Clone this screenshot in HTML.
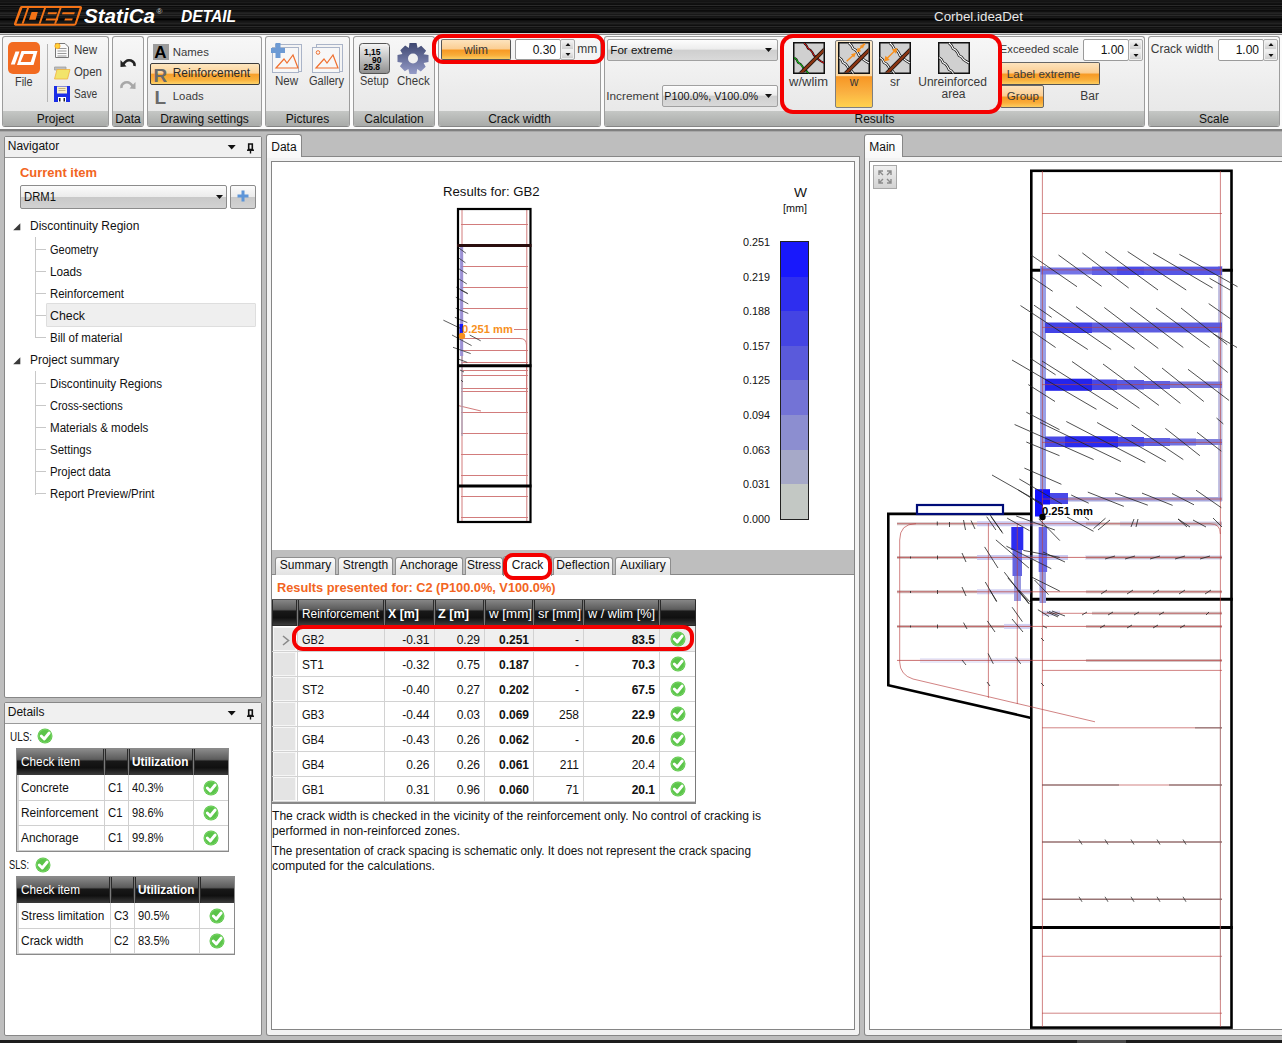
<!DOCTYPE html><html><head><meta charset="utf-8"><title>IDEA StatiCa DETAIL</title><style>
*{margin:0;padding:0;box-sizing:border-box}
html,body{width:1282px;height:1043px;overflow:hidden;background:#bdbdbd;font-family:"Liberation Sans",sans-serif;color:#000}
.t{position:absolute;white-space:nowrap}
.r{position:absolute}
svg{position:absolute;overflow:visible}
</style></head><body>
<div class="r" style="left:0px;top:0px;width:1282px;height:33px;background:linear-gradient(180deg,#161616 0px,#161616 1px,#141414 1px,#141414 2px,#1c1c1c 2px,#1c1c1c 3px,#111111 3px,#111111 4px,#0e0e0e 4px,#0e0e0e 5px,#2a2a2a 5px,#2a2a2a 6px,#0a0a0a 6px,#0a0a0a 7px,#181818 7px,#181818 8px,#121212 8px,#121212 9px,#1a1a1a 9px,#1a1a1a 10px,#0c0c0c 10px,#0c0c0c 11px,#101010 11px,#101010 12px,#1f1f1f 12px,#1f1f1f 13px,#242424 13px,#242424 14px,#181818 14px,#181818 15px,#2a2a2a 15px,#2a2a2a 16px,#141414 16px,#141414 17px,#1a1a1a 17px,#1a1a1a 18px,#0a0a0a 18px,#0a0a0a 19px,#020202 19px,#020202 20px,#0f0f0f 20px,#0f0f0f 21px,#161616 21px,#161616 22px,#1a1a1a 22px,#1a1a1a 23px,#232323 23px,#232323 24px,#181818 24px,#181818 25px,#0f0f0f 25px,#0f0f0f 26px,#2a2a2a 26px,#2a2a2a 27px,#111111 27px,#111111 28px,#1a1a1a 28px,#1a1a1a 29px,#121212 29px,#121212 30px,#141414 30px,#141414 31px,#0c0c0c 31px,#0c0c0c 32px,#0a0a0a 32px,#0a0a0a 33px);"></div>
<svg style="left:0;top:0" width="100" height="33" viewBox="0 0 100 33">
<g fill="#f47316">
<path d="M21.5 6 L80.5 6 Q82.6 6.2 82 8.2 L76.6 24 Q76 25.8 74 25.8 L15.5 25.8 Q13.4 25.6 14 23.6 L19.6 7.8 Q20.2 6 21.5 6 Z M22.4 8 L79.6 8 L74.6 23.8 L16.4 23.8 Z" fill-rule="evenodd"/>
<path d="M27 8 L29 8 L23.6 23.8 L21.6 23.8 Z"/>
<path d="M44 8 L46 8 L40.6 23.8 L38.6 23.8 Z"/>
<path d="M59.5 8 L61.5 8 L56.1 23.8 L54.1 23.8 Z"/>
<path d="M31.6 12 L37.8 12 L35.6 19.8 L29 19.8 Z"/>
<path d="M48.2 12.2 L57 12.2 L56.4 14.2 L47.5 14.2 Z"/>
<path d="M46.2 18.4 L58.4 18.4 L57.7 20.6 L45.5 20.6 Z"/>
<path d="M62.6 12.2 L74.8 12.2 L74.2 14.2 L62 14.2 Z"/>
<path d="M65 18.4 L72.8 18.4 L72.1 20.4 L64.3 20.4 Z"/>
</g>
</svg>
<div class="t" style="left:83.80px;top:5px;font-size:20px;line-height:22px;font-weight:700;color:#fff;font-style:italic;transform:scaleX(1.0304);transform-origin:0 0;">StatiCa</div>
<div class="t" style="left:156.52px;top:7px;font-size:8px;line-height:9px;color:#ccc;">&reg;</div>
<div class="t" style="left:180.54px;top:8px;font-size:16px;line-height:17px;font-weight:700;color:#fff;font-style:italic;transform:scaleX(0.9718);transform-origin:0 0;">DETAIL</div>
<div class="t" style="left:933.70px;top:9px;font-size:13.3px;line-height:15px;color:#e6e6e6;transform:scaleX(1.0033);transform-origin:0 0;">Corbel.ideaDet</div>
<div class="r" style="left:0px;top:33px;width:1282px;height:1px;background:#d0d0d0"></div>
<div class="r" style="left:0px;top:34px;width:1282px;height:1px;background:#8a8a8a"></div>
<div class="r" style="left:0px;top:35px;width:1282px;height:94px;background:#fbfbfb"></div>
<div class="r" style="left:0px;top:129px;width:1282px;height:2px;background:#7f7f7f"></div>
<div class="r" style="left:2px;top:36px;width:107px;height:91px;border:1px solid #9c9c9c;border-bottom-color:#858585;border-radius:3px;background:linear-gradient(180deg,#f7f7f7 0%,#ececec 60%,#e6e6e6 100%);overflow:hidden"><div style="position:absolute;left:0;right:0;top:74px;bottom:0;background:linear-gradient(180deg,#c5c7c5,#a9aba9)"></div></div>
<div class="t" style="left:2.00px;top:112px;font-size:12px;line-height:14px;color:#111;width:107px;text-align:center;">Project</div>
<div class="r" style="left:112px;top:36px;width:32px;height:91px;border:1px solid #9c9c9c;border-bottom-color:#858585;border-radius:3px;background:linear-gradient(180deg,#f7f7f7 0%,#ececec 60%,#e6e6e6 100%);overflow:hidden"><div style="position:absolute;left:0;right:0;top:74px;bottom:0;background:linear-gradient(180deg,#c5c7c5,#a9aba9)"></div></div>
<div class="t" style="left:112.00px;top:112px;font-size:12px;line-height:14px;color:#111;width:32px;text-align:center;">Data</div>
<div class="r" style="left:147px;top:36px;width:115px;height:91px;border:1px solid #9c9c9c;border-bottom-color:#858585;border-radius:3px;background:linear-gradient(180deg,#f7f7f7 0%,#ececec 60%,#e6e6e6 100%);overflow:hidden"><div style="position:absolute;left:0;right:0;top:74px;bottom:0;background:linear-gradient(180deg,#c5c7c5,#a9aba9)"></div></div>
<div class="t" style="left:147.00px;top:112px;font-size:12px;line-height:14px;color:#111;width:115px;text-align:center;">Drawing settings</div>
<div class="r" style="left:265px;top:36px;width:85px;height:91px;border:1px solid #9c9c9c;border-bottom-color:#858585;border-radius:3px;background:linear-gradient(180deg,#f7f7f7 0%,#ececec 60%,#e6e6e6 100%);overflow:hidden"><div style="position:absolute;left:0;right:0;top:74px;bottom:0;background:linear-gradient(180deg,#c5c7c5,#a9aba9)"></div></div>
<div class="t" style="left:265.00px;top:112px;font-size:12px;line-height:14px;color:#111;width:85px;text-align:center;">Pictures</div>
<div class="r" style="left:353px;top:36px;width:82px;height:91px;border:1px solid #9c9c9c;border-bottom-color:#858585;border-radius:3px;background:linear-gradient(180deg,#f7f7f7 0%,#ececec 60%,#e6e6e6 100%);overflow:hidden"><div style="position:absolute;left:0;right:0;top:74px;bottom:0;background:linear-gradient(180deg,#c5c7c5,#a9aba9)"></div></div>
<div class="t" style="left:353.00px;top:112px;font-size:12px;line-height:14px;color:#111;width:82px;text-align:center;">Calculation</div>
<div class="r" style="left:438px;top:36px;width:163px;height:91px;border:1px solid #9c9c9c;border-bottom-color:#858585;border-radius:3px;background:linear-gradient(180deg,#f7f7f7 0%,#ececec 60%,#e6e6e6 100%);overflow:hidden"><div style="position:absolute;left:0;right:0;top:74px;bottom:0;background:linear-gradient(180deg,#c5c7c5,#a9aba9)"></div></div>
<div class="t" style="left:438.00px;top:112px;font-size:12px;line-height:14px;color:#111;width:163px;text-align:center;">Crack width</div>
<div class="r" style="left:604px;top:36px;width:541px;height:91px;border:1px solid #9c9c9c;border-bottom-color:#858585;border-radius:3px;background:linear-gradient(180deg,#f7f7f7 0%,#ececec 60%,#e6e6e6 100%);overflow:hidden"><div style="position:absolute;left:0;right:0;top:74px;bottom:0;background:linear-gradient(180deg,#c5c7c5,#a9aba9)"></div></div>
<div class="t" style="left:604.00px;top:112px;font-size:12px;line-height:14px;color:#111;width:541px;text-align:center;">Results</div>
<div class="r" style="left:1148px;top:36px;width:132px;height:91px;border:1px solid #9c9c9c;border-bottom-color:#858585;border-radius:3px;background:linear-gradient(180deg,#f7f7f7 0%,#ececec 60%,#e6e6e6 100%);overflow:hidden"><div style="position:absolute;left:0;right:0;top:74px;bottom:0;background:linear-gradient(180deg,#c5c7c5,#a9aba9)"></div></div>
<div class="t" style="left:1148.00px;top:112px;font-size:12px;line-height:14px;color:#111;width:132px;text-align:center;">Scale</div>
<svg style="left:8px;top:42px" width="32" height="32" viewBox="0 0 32 32">
<rect x="0" y="0" width="32" height="32" rx="5" fill="#f26b21"/>
<path d="M7.5 9.5 L11.5 9.5 L6.8 22.5 L2.8 22.5 Z" fill="#fff"/>
<path d="M13.5 9 L29.5 9 L25.5 23 L9 23 Z M16 12 L25.3 12 L22.7 20 L12.6 20 Z" fill="#fff" fill-rule="evenodd"/>
</svg>
<div class="t" style="left:14.78px;top:75px;font-size:12px;line-height:14px;color:#3a3a3a;transform:scaleX(0.9047);transform-origin:0 0;">File</div>
<div class="r" style="left:47px;top:44px;width:1px;height:58px;background:#b4b4b4"></div>
<svg style="left:54px;top:42px" width="17" height="17" viewBox="0 0 17 17">
<path d="M1.5 1.5 L11 1.5 L14.5 5 L14.5 15.5 L1.5 15.5 Z" fill="#fafafa" stroke="#777" stroke-width="1"/>
<path d="M3.5 6.5 H12.5 M3.5 9 H12.5 M3.5 11.5 H12.5 M3.5 14 H12.5" stroke="#9a9a9a" stroke-width="1"/>
<circle cx="3.5" cy="4" r="2.6" fill="#ffd23a" stroke="#f5a020" stroke-width="0.8"/>
</svg>
<div class="t" style="left:73.98px;top:43px;font-size:12px;line-height:14px;color:#3a3a3a;transform:scaleX(0.9660);transform-origin:0 0;">New</div>
<svg style="left:54px;top:66px" width="17" height="14" viewBox="0 0 17 14">
<path d="M0.5 1 L12 1 L12 4 L0.5 4 Z" fill="#bdbdbd" stroke="#a0a0a0" stroke-width="0.8"/>
<path d="M3 3.5 L16 3.5 L13.5 13 L0.5 13 Z" fill="#f2e46a" stroke="#f0b040" stroke-width="0.8"/>
</svg>
<div class="t" style="left:73.98px;top:65px;font-size:12px;line-height:14px;color:#3a3a3a;transform:scaleX(0.9503);transform-origin:0 0;">Open</div>
<svg style="left:54px;top:86px" width="16" height="16" viewBox="0 0 16 16">
<rect x="0" y="0" width="16" height="16" fill="#1a2de6"/>
<rect x="3" y="0.5" width="10" height="7" fill="#f8efc8"/>
<path d="M4.5 2.5 H11.5 M4.5 4.5 H11.5" stroke="#b0a070" stroke-width="0.8"/>
<rect x="4" y="11" width="8" height="5" fill="#fff"/>
<rect x="5" y="12" width="1.5" height="3.5" fill="#222"/><rect x="9.5" y="12" width="1.5" height="3.5" fill="#222"/>
</svg>
<div class="t" style="left:73.98px;top:87px;font-size:12px;line-height:14px;color:#3a3a3a;transform:scaleX(0.8480);transform-origin:0 0;">Save</div>
<svg style="left:120px;top:56px" width="16" height="34" viewBox="0 0 16 34">
<path d="M3 9 Q6 3 11 4.5 Q15 6 14.5 10" fill="none" stroke="#222" stroke-width="2.6"/>
<path d="M0.5 4 L6.5 10.5 L0.5 11 Z" fill="#222"/>
<path d="M13 31 Q10 25 5 26.5 Q1 28 1.5 32" fill="none" stroke="#a8a8a8" stroke-width="2.6"/>
<path d="M15.5 26 L9.5 32.5 L15.5 33 Z" fill="#a8a8a8"/>
</svg>
<div class="r" style="left:150px;top:63px;width:110px;height:22px;border:1px solid #3d3d3d;border-radius:2px;background:linear-gradient(180deg,#fde6c0 0%,#fbd39a 45%,#f7a02c 52%,#f9b13d 80%,#fdd36a 100%)"></div>
<div class="r" style="left:153px;top:44px;width:16px;height:16px;background:#9c9c9c"></div>
<div class="t" style="left:150.48px;top:43px;font-size:17px;line-height:19px;font-weight:900;color:#000;font-weight:bold;width:20px;text-align:center;">A</div>
<div class="t" style="left:150.36px;top:65px;font-size:19px;line-height:21px;font-weight:700;color:#6a6a6a;width:20px;text-align:center;">R</div>
<div class="t" style="left:151.36px;top:87px;font-size:19px;line-height:21px;font-weight:700;color:#6a6a6a;width:18px;text-align:center;">L</div>
<div class="t" style="left:172.82px;top:46px;font-size:11.4px;line-height:12px;color:#3a3a3a;">Names</div>
<div class="t" style="left:172.79px;top:66px;font-size:11.9px;line-height:14px;color:#2a2a2a;">Reinforcement</div>
<div class="t" style="left:172.82px;top:90px;font-size:11.3px;line-height:12px;color:#3a3a3a;">Loads</div>
<svg style="left:270px;top:41px" width="80" height="34" viewBox="0 0 80 34">
<rect x="5.5" y="3.5" width="26" height="27" fill="#f4f4f4" stroke="#aab4c8"/>
<rect x="2.5" y="6.5" width="26" height="25" fill="#f7f7f7" stroke="#aab4c8"/>
<path d="M6 27 L14 18 L17 22 L23 14 L28 27 Z" fill="none" stroke="#f07030" stroke-width="1.2"/>
<rect x="1" y="7" width="14" height="5" fill="#6c9ad4"/><rect x="5.5" y="2" width="5" height="15" fill="#6c9ad4"/>
<rect x="46.5" y="3.5" width="26" height="27" fill="#f4f4f4" stroke="#aab4c8"/>
<rect x="42.5" y="6.5" width="27" height="25" fill="#f7f7f7" stroke="#aab4c8"/>
<path d="M46 27 L54 18 L57 22 L63 14 L68 27 Z" fill="none" stroke="#f07030" stroke-width="1.2"/>
<circle cx="48" cy="11.5" r="1.8" fill="none" stroke="#f07030" stroke-width="1"/>
</svg>
<div class="t" style="left:274.88px;top:74px;font-size:12px;line-height:14px;color:#3a3a3a;transform:scaleX(0.9660);transform-origin:0 0;">New</div>
<div class="t" style="left:308.98px;top:74px;font-size:12px;line-height:14px;color:#3a3a3a;transform:scaleX(0.9233);transform-origin:0 0;">Gallery</div>
<svg style="left:359px;top:43px" width="72" height="32" viewBox="0 0 72 32">
<defs><linearGradient id="gs" x1="0" y1="0" x2="0" y2="1"><stop offset="0" stop-color="#f6f6f6"/><stop offset="1" stop-color="#8e8e8e"/></linearGradient>
<linearGradient id="gg" x1="0" y1="0" x2="0" y2="1"><stop offset="0" stop-color="#3d4670"/><stop offset="1" stop-color="#959cc8"/></linearGradient></defs>
<rect x="0.5" y="0.5" width="30" height="30" rx="3" fill="url(#gs)" stroke="#555"/>
<text x="5" y="12" font-family="Liberation Sans" font-weight="bold" font-size="8.5">1,15</text>
<text x="13" y="19.5" font-family="Liberation Sans" font-weight="bold" font-size="8.5">90</text>
<text x="4.5" y="27" font-family="Liberation Sans" font-weight="bold" font-size="8.5">25.8</text>
<g transform="translate(54,15.5)">
<path d="M-3.5 -15.5 L3.5 -15.5 L4.6 -10.6 L8.2 -12.7 L13.1 -7.8 L10.6 -4.2 L15.5 -3.5 L15.5 3.5 L10.6 4.6 L12.7 8.2 L7.8 13.1 L4.2 10.6 L3.5 15.5 L-3.5 15.5 L-4.6 10.6 L-8.2 12.7 L-13.1 7.8 L-10.6 4.2 L-15.5 3.5 L-15.5 -3.5 L-10.6 -4.6 L-12.7 -8.2 L-7.8 -13.1 L-4.2 -10.6 Z" fill="url(#gg)"/>
<circle r="5" fill="#f0f0f0"/>
</g>
</svg>
<div class="t" style="left:359.78px;top:74px;font-size:12px;line-height:14px;color:#3a3a3a;transform:scaleX(0.9152);transform-origin:0 0;">Setup</div>
<div class="t" style="left:396.58px;top:74px;font-size:12px;line-height:14px;color:#3a3a3a;transform:scaleX(0.9613);transform-origin:0 0;">Check</div>
<div class="r" style="left:441px;top:39px;width:70px;height:21px;border:1px solid #555;border-top-color:#777;border-radius:2px;background:linear-gradient(180deg,#fde3bd 0%,#fbcf95 45%,#f79a25 55%,#f9ad3a 80%,#fccd60 100%);"></div>
<div class="t" style="left:441.00px;top:43px;font-size:12px;line-height:14px;color:#3a3a3a;width:70px;text-align:center;">wlim</div>
<div class="r" style="left:515px;top:39px;width:46px;height:21px;background:#fff;border:1px solid #9a9a9a;border-radius:2px"></div>
<div class="t" style="left:515.00px;top:43px;font-size:12px;line-height:14px;color:#111;width:41px;text-align:right;">0.30</div>
<div class="r" style="left:560px;top:39px;width:15px;height:21px;background:#f0f0f0;border:1px solid #a8a8a8;border-radius:2px"></div>
<div class="r" style="left:562px;top:41px;width:11px;height:7.5px;background:linear-gradient(180deg,#f2f2f2,#cfcfcf)"></div>
<div class="r" style="left:562px;top:50.5px;width:11px;height:7.5px;background:linear-gradient(180deg,#f2f2f2,#cfcfcf)"></div>
<svg style="left:564.5px;top:42px" width="6" height="15" viewBox="0 0 6 15"><path d="M0.5 4 L3 1 L5.5 4 Z" fill="#111"/><path d="M0.5 11 L3 14 L5.5 11 Z" fill="#111"/></svg>
<div class="t" style="left:577.28px;top:42px;font-size:12px;line-height:14px;color:#3a3a3a;">mm</div>
<div class="r" style="left:607px;top:39px;width:171px;height:22px;border:1px solid #a0a0a0;border-radius:2px;background:linear-gradient(180deg,#fdfdfd 0%,#ededed 45%,#cfcfcf 52%,#d9d9d9 100%)"></div>
<div class="t" style="left:610.30px;top:44px;font-size:11.6px;line-height:12px;color:#111;">For extreme</div>
<svg style="left:765px;top:48.0px" width="7" height="4" viewBox="0 0 7 4"><path d="M0 0 L7 0 L3.5 4 Z" fill="#111"/></svg>
<div class="t" style="left:606.29px;top:89px;font-size:11.8px;line-height:14px;color:#3a3a3a;">Increment</div>
<div class="r" style="left:662px;top:85px;width:116px;height:22px;border:1px solid #a0a0a0;border-radius:2px;background:linear-gradient(180deg,#fdfdfd 0%,#ededed 45%,#cfcfcf 52%,#d9d9d9 100%)"></div>
<div class="t" style="left:664.35px;top:90px;font-size:10.8px;line-height:12px;color:#111;">P100.0%, V100.0%</div>
<svg style="left:765px;top:94.0px" width="7" height="4" viewBox="0 0 7 4"><path d="M0 0 L7 0 L3.5 4 Z" fill="#111"/></svg>
<div class="r" style="left:835px;top:40px;width:38px;height:68px;border:1px solid #7f7f7f;border-radius:2px;background:linear-gradient(180deg,#fde9c8 0%,#fbd9a4 53%,#f79624 54%,#fab142 78%,#ffd24e 100%)"></div>
<svg style="left:793px;top:42px" width="32" height="32" viewBox="0 0 32 32"><rect x="0.75" y="0.75" width="30.5" height="30.5" fill="#d0d0d0" stroke="#111" stroke-width="1.5"/><path d="M11 1 L13.5 3.5 L15 6.5 L17.5 8 L19.5 10.5 L21 13.5 L23.5 15 L25.5 17.5 L27.5 19 L31 21" fill="none" stroke="#111" stroke-width="2"/><path d="M11 1 L13.5 3.5 L15 6.5 L17.5 8 L19.5 10.5 L21 13.5 L23.5 15 L25.5 17.5 L27.5 19 L31 21" fill="none" stroke="#e01010" stroke-width="1"/><path d="M1 15.5 L3.5 17.5 L5 20.5 L7.5 22 L9.5 24.5 L11 27.5 L13.5 29 L15.5 31.5" fill="none" stroke="#111" stroke-width="2"/><path d="M1 15.5 L3.5 17.5 L5 20.5 L7.5 22 L9.5 24.5 L11 27.5 L13.5 29 L15.5 31.5" fill="none" stroke="#10e010" stroke-width="1"/><clipPath id="ciwwlim"><rect x="1.5" y="1.5" width="29" height="29"/></clipPath><g clip-path="url(#ciwwlim)"><path d="M6.5 32.5 L32.5 6.5" stroke="#111" stroke-width="4"/><path d="M6.5 32.5 L32.5 6.5" stroke="#8a3412" stroke-width="2.6"/></g></svg>
<svg style="left:838px;top:42px" width="32" height="32" viewBox="0 0 32 32"><rect x="0.75" y="0.75" width="30.5" height="30.5" fill="#d0d0d0" stroke="#111" stroke-width="1.5"/><path d="M11 1 L13.5 3.5 L15 6.5 L17.5 8 L19.5 10.5 L21 13.5 L23.5 15 L25.5 17.5 L27.5 19 L31 21" fill="none" stroke="#111" stroke-width="2.6"/><path d="M11 1 L13.5 3.5 L15 6.5 L17.5 8 L19.5 10.5 L21 13.5 L23.5 15 L25.5 17.5 L27.5 19 L31 21" fill="none" stroke="#fff" stroke-width="1.1"/><path d="M1 15.5 L3.5 17.5 L5 20.5 L7.5 22 L9.5 24.5 L11 27.5 L13.5 29 L15.5 31.5" fill="none" stroke="#111" stroke-width="2.6"/><path d="M1 15.5 L3.5 17.5 L5 20.5 L7.5 22 L9.5 24.5 L11 27.5 L13.5 29 L15.5 31.5" fill="none" stroke="#fff" stroke-width="1.1"/><clipPath id="ciw"><rect x="1.5" y="1.5" width="29" height="29"/></clipPath><g clip-path="url(#ciw)"><path d="M6.5 32.5 L32.5 6.5" stroke="#111" stroke-width="4"/><path d="M6.5 32.5 L32.5 6.5" stroke="#8a3412" stroke-width="2.6"/></g><path d="M8.7 19.2 L15.5 13 M20.5 8 L27 1.7" stroke="#f7901e" stroke-width="1.5"/><path d="M18 10.8 L13 12.2 L16.2 15.5 Z M18.4 10.4 L23.2 9.2 L19.8 5.6 Z" fill="#f7901e"/><path d="M21.5 4 L27 1 L25 6.5 Z" fill="#f7901e" fill-opacity="0.8"/></svg>
<svg style="left:879px;top:42px" width="32" height="32" viewBox="0 0 32 32"><rect x="0.75" y="0.75" width="30.5" height="30.5" fill="#d0d0d0" stroke="#111" stroke-width="1.5"/><path d="M11 1 L13.5 3.5 L15 6.5 L17.5 8 L19.5 10.5 L21 13.5 L23.5 15 L25.5 17.5 L27.5 19 L31 21" fill="none" stroke="#111" stroke-width="2.6"/><path d="M11 1 L13.5 3.5 L15 6.5 L17.5 8 L19.5 10.5 L21 13.5 L23.5 15 L25.5 17.5 L27.5 19 L31 21" fill="none" stroke="#fff" stroke-width="1.1"/><path d="M1 15.5 L3.5 17.5 L5 20.5 L7.5 22 L9.5 24.5 L11 27.5 L13.5 29 L15.5 31.5" fill="none" stroke="#111" stroke-width="2.6"/><path d="M1 15.5 L3.5 17.5 L5 20.5 L7.5 22 L9.5 24.5 L11 27.5 L13.5 29 L15.5 31.5" fill="none" stroke="#fff" stroke-width="1.1"/><clipPath id="cisr"><rect x="1.5" y="1.5" width="29" height="29"/></clipPath><g clip-path="url(#cisr)"><path d="M6.5 32.5 L32.5 6.5" stroke="#111" stroke-width="4"/><path d="M6.5 32.5 L32.5 6.5" stroke="#8a3412" stroke-width="2.6"/></g><path d="M7.5 17 L16 8.5" stroke="#f7901e" stroke-width="1.5"/><path d="M5 19.5 L6.5 13.8 L10.8 18 Z M18.5 6 L12.8 7.5 L17 11.8 Z" fill="#f7901e"/></svg>
<svg style="left:938px;top:42px" width="32" height="32" viewBox="0 0 32 32"><rect x="0.75" y="0.75" width="30.5" height="30.5" fill="#d0d0d0" stroke="#111" stroke-width="1.5"/><path d="M11 1 L13.5 3.5 L15 6.5 L17.5 8 L19.5 10.5 L21 13.5 L23.5 15 L25.5 17.5 L27.5 19 L31 21" fill="none" stroke="#111" stroke-width="2.6"/><path d="M11 1 L13.5 3.5 L15 6.5 L17.5 8 L19.5 10.5 L21 13.5 L23.5 15 L25.5 17.5 L27.5 19 L31 21" fill="none" stroke="#fff" stroke-width="1.1"/><path d="M1 15.5 L3.5 17.5 L5 20.5 L7.5 22 L9.5 24.5 L11 27.5 L13.5 29 L15.5 31.5" fill="none" stroke="#111" stroke-width="2.6"/><path d="M1 15.5 L3.5 17.5 L5 20.5 L7.5 22 L9.5 24.5 L11 27.5 L13.5 29 L15.5 31.5" fill="none" stroke="#fff" stroke-width="1.1"/></svg>
<div class="t" style="left:788.68px;top:75px;font-size:12px;line-height:14px;color:#3a3a3a;transform:scaleX(1.0833);transform-origin:0 0;">w/wlim</div>
<div class="t" style="left:835.00px;top:75px;font-size:12px;line-height:14px;color:#3a3a3a;width:38px;text-align:center;">w</div>
<div class="t" style="left:878.00px;top:75px;font-size:12px;line-height:14px;color:#3a3a3a;width:34px;text-align:center;">sr</div>
<div class="t" style="left:918.28px;top:75px;font-size:12px;line-height:14px;color:#3a3a3a;">Unreinforced</div>
<div class="t" style="left:919.00px;top:87px;font-size:12px;line-height:14px;color:#3a3a3a;width:69px;text-align:center;">area</div>
<div class="t" style="left:999.83px;top:43px;font-size:11.2px;line-height:12px;color:#3a3a3a;">Exceeded scale</div>
<div class="r" style="left:1083px;top:39px;width:46px;height:22px;background:#fff;border:1px solid #9a9a9a;border-radius:2px"></div>
<div class="t" style="left:1083.00px;top:43px;font-size:12px;line-height:14px;color:#111;width:41px;text-align:right;">1.00</div>
<div class="r" style="left:1128px;top:39px;width:15px;height:22px;background:#f0f0f0;border:1px solid #a8a8a8;border-radius:2px"></div>
<div class="r" style="left:1130px;top:41px;width:11px;height:8.0px;background:linear-gradient(180deg,#f2f2f2,#cfcfcf)"></div>
<div class="r" style="left:1130px;top:51.0px;width:11px;height:8.0px;background:linear-gradient(180deg,#f2f2f2,#cfcfcf)"></div>
<svg style="left:1132.5px;top:42px" width="6" height="16" viewBox="0 0 6 16"><path d="M0.5 4 L3 1 L5.5 4 Z" fill="#111"/><path d="M0.5 12 L3 15 L5.5 12 Z" fill="#111"/></svg>
<div class="r" style="left:1000px;top:62px;width:100px;height:23px;border:1px solid #555;border-top-color:#666;border-radius:2px;background:linear-gradient(180deg,#fde3bd 0%,#fbcf95 45%,#f79a25 55%,#f9ad3a 80%,#fccd60 100%);"></div>
<div class="t" style="left:1006.80px;top:68px;font-size:11.6px;line-height:12px;color:#3a3a3a;">Label extreme</div>
<div class="r" style="left:1000px;top:85px;width:44px;height:23px;border:1px solid #666;border-radius:2px;background:linear-gradient(180deg,#fde3bd 0%,#fbcf95 45%,#f79a25 55%,#f9ad3a 80%,#fccd60 100%);"></div>
<div class="t" style="left:1006.80px;top:90px;font-size:11.6px;line-height:12px;color:#3a3a3a;">Group</div>
<div class="t" style="left:1080.28px;top:89px;font-size:12px;line-height:14px;color:#3a3a3a;">Bar</div>
<div class="t" style="left:1150.78px;top:42px;font-size:12px;line-height:14px;color:#3a3a3a;">Crack width</div>
<div class="r" style="left:1218px;top:39px;width:46px;height:22px;background:#fff;border:1px solid #9a9a9a;border-radius:2px"></div>
<div class="t" style="left:1218.00px;top:43px;font-size:12px;line-height:14px;color:#111;width:41px;text-align:right;">1.00</div>
<div class="r" style="left:1263px;top:39px;width:15px;height:22px;background:#f0f0f0;border:1px solid #a8a8a8;border-radius:2px"></div>
<div class="r" style="left:1265px;top:41px;width:11px;height:8.0px;background:linear-gradient(180deg,#f2f2f2,#cfcfcf)"></div>
<div class="r" style="left:1265px;top:51.0px;width:11px;height:8.0px;background:linear-gradient(180deg,#f2f2f2,#cfcfcf)"></div>
<svg style="left:1267.5px;top:42px" width="6" height="16" viewBox="0 0 6 16"><path d="M0.5 4 L3 1 L5.5 4 Z" fill="#111"/><path d="M0.5 12 L3 15 L5.5 12 Z" fill="#111"/></svg>
<div class="r" style="left:432px;top:34px;width:173px;height:29.5px;border:4px solid #f40000;border-radius:11px"></div>
<div class="r" style="left:780px;top:34px;width:221.5px;height:79.5px;border:4px solid #f40000;border-radius:13px"></div>
<div class="r" style="left:0px;top:131px;width:1282px;height:909px;background:#bebebe"></div>
<div class="r" style="left:0px;top:1040px;width:1282px;height:3px;background:#1c1c1c"></div>
<div class="r" style="left:1077px;top:1040px;width:49px;height:3px;background:#4a4a4a"></div>
<div class="r" style="left:0px;top:131px;width:1282px;height:1px;background:#a8a8a8"></div>
<div class="r" style="left:4px;top:136px;width:258px;height:562px;background:#fff;border:1px solid #878787;border-radius:2px"></div>
<div class="r" style="left:5px;top:137px;width:256px;height:21px;background:#f0f0f0;border-bottom:1px solid #9a9a9a"></div>
<div class="t" style="left:7.78px;top:139px;font-size:12px;line-height:14px;color:#111;">Navigator</div>
<svg style="left:227px;top:143px" width="30" height="12" viewBox="0 0 30 12"><path d="M0.7 2 L8.7 2 L4.7 6.5 Z" fill="#111"/><path d="M21.7 1 H25.3 V6.5 H21.7 Z" fill="none" stroke="#111" stroke-width="1.6"/><path d="M20 7.2 H27" stroke="#111" stroke-width="1.5"/><path d="M23.5 7.5 V10.5" stroke="#111" stroke-width="1.4"/></svg>
<div class="r" style="left:4px;top:702px;width:258px;height:334px;background:#fff;border:1px solid #878787;border-radius:2px"></div>
<div class="r" style="left:5px;top:703px;width:256px;height:21px;background:#f0f0f0;border-bottom:1px solid #9a9a9a"></div>
<div class="t" style="left:7.78px;top:705px;font-size:12px;line-height:14px;color:#111;">Details</div>
<svg style="left:227px;top:709px" width="30" height="12" viewBox="0 0 30 12"><path d="M0.7 2 L8.7 2 L4.7 6.5 Z" fill="#111"/><path d="M21.7 1 H25.3 V6.5 H21.7 Z" fill="none" stroke="#111" stroke-width="1.6"/><path d="M20 7.2 H27" stroke="#111" stroke-width="1.5"/><path d="M23.5 7.5 V10.5" stroke="#111" stroke-width="1.4"/></svg>
<div class="r" style="left:266px;top:134px;width:36px;height:24px;background:linear-gradient(180deg,#fff,#f8f8f8);border:1px solid #878787;border-bottom:none;border-radius:3px 3px 0 0"></div>
<div class="t" style="left:271.28px;top:140px;font-size:12px;line-height:14px;color:#111;">Data</div>
<div class="r" style="left:266px;top:157px;width:594px;height:879px;background:#f3f3f3;border:1px solid #878787;border-top:none;border-radius:0 0 3px 3px"></div>
<div class="r" style="left:302px;top:156px;width:558px;height:1px;background:#878787"></div>
<div class="r" style="left:267px;top:157px;width:34px;height:1px;background:#f8f8f8"></div>
<div class="r" style="left:271px;top:161px;width:584px;height:869px;background:#fff;border:1px solid #858585"></div>
<div class="r" style="left:864px;top:134px;width:39px;height:24px;background:linear-gradient(180deg,#fff,#f8f8f8);border:1px solid #878787;border-bottom:none;border-radius:3px 3px 0 0"></div>
<div class="t" style="left:869.28px;top:140px;font-size:12px;line-height:14px;color:#111;">Main</div>
<div class="r" style="left:864px;top:157px;width:440px;height:879px;background:#f3f3f3;border:1px solid #878787;border-top:none;border-radius:0 0 3px 3px"></div>
<div class="r" style="left:903px;top:156px;width:401px;height:1px;background:#878787"></div>
<div class="r" style="left:865px;top:157px;width:37px;height:1px;background:#f8f8f8"></div>
<div class="r" style="left:869px;top:161px;width:430px;height:869px;background:#fff;border:1px solid #858585"></div>
<div class="t" style="left:19.52px;top:165px;font-size:13px;line-height:15px;font-weight:700;color:#f26522;transform:scaleX(0.9962);transform-origin:0 0;">Current item</div>
<div class="r" style="left:20px;top:185px;width:207px;height:24px;border:1px solid #8c8c8c;border-radius:2px;background:linear-gradient(180deg,#fbfbfb 0%,#ececec 48%,#c9c9c9 52%,#d2d2d2 100%)"></div>
<div class="t" style="left:23.65px;top:190px;font-size:12.5px;line-height:14px;color:#111;transform:scaleX(0.9034);transform-origin:0 0;">DRM1</div>
<svg style="left:216px;top:195px" width="7" height="5" viewBox="0 0 7 5"><path d="M0 0 L7 0 L3.5 4 Z" fill="#111"/></svg>
<div class="r" style="left:230px;top:185px;width:26px;height:24px;border:1px solid #8c8c8c;border-radius:2px;background:linear-gradient(180deg,#fbfbfb 0%,#ececec 48%,#c9c9c9 52%,#d2d2d2 100%)"></div>
<svg style="left:237px;top:190px" width="12" height="12" viewBox="0 0 12 12"><path d="M4.5 0.5 H7.5 V4.5 H11.5 V7.5 H7.5 V11.5 H4.5 V7.5 H0.5 V4.5 H4.5 Z" fill="#5d95d8"/></svg>
<svg style="left:13px;top:223px" width="8" height="8" viewBox="0 0 8 8"><path d="M7.3 0.2 L7.3 7.2 L0.2 7.2 Z" fill="#3a3a3a"/></svg>
<div class="t" style="left:29.68px;top:219px;font-size:12px;line-height:14px;color:#111;transform:scaleX(0.9992);transform-origin:0 0;">Discontinuity Region</div>
<div class="r" style="left:46px;top:303px;width:210px;height:24px;background:#efefef;border:1px solid #dedede;border-radius:1px"></div>
<div class="r" style="left:35px;top:237px;width:1px;height:101px;background:#c8c8c8"></div>
<div class="r" style="left:36px;top:249px;width:10px;height:1px;background:#c8c8c8"></div>
<div class="t" style="left:49.88px;top:243px;font-size:12px;line-height:14px;color:#111;transform:scaleX(0.9148);transform-origin:0 0;">Geometry</div>
<div class="r" style="left:36px;top:271px;width:10px;height:1px;background:#c8c8c8"></div>
<div class="t" style="left:49.88px;top:265px;font-size:12px;line-height:14px;color:#111;transform:scaleX(0.9785);transform-origin:0 0;">Loads</div>
<div class="r" style="left:36px;top:293px;width:10px;height:1px;background:#c8c8c8"></div>
<div class="t" style="left:49.88px;top:287px;font-size:12px;line-height:14px;color:#111;transform:scaleX(0.9481);transform-origin:0 0;">Reinforcement</div>
<div class="r" style="left:36px;top:315px;width:10px;height:1px;background:#c8c8c8"></div>
<div class="t" style="left:49.88px;top:309px;font-size:12px;line-height:14px;color:#111;transform:scaleX(1.0289);transform-origin:0 0;">Check</div>
<div class="r" style="left:36px;top:337px;width:10px;height:1px;background:#c8c8c8"></div>
<div class="t" style="left:49.88px;top:331px;font-size:12px;line-height:14px;color:#111;transform:scaleX(0.9581);transform-origin:0 0;">Bill of material</div>
<svg style="left:13px;top:357px" width="8" height="8" viewBox="0 0 8 8"><path d="M7.3 0.2 L7.3 7.2 L0.2 7.2 Z" fill="#3a3a3a"/></svg>
<div class="t" style="left:29.68px;top:353px;font-size:12px;line-height:14px;color:#111;transform:scaleX(0.9919);transform-origin:0 0;">Project summary</div>
<div class="r" style="left:35px;top:371px;width:1px;height:124px;background:#c8c8c8"></div>
<div class="r" style="left:36px;top:383px;width:10px;height:1px;background:#c8c8c8"></div>
<div class="t" style="left:49.88px;top:377px;font-size:12px;line-height:14px;color:#111;transform:scaleX(0.9723);transform-origin:0 0;">Discontinuity Regions</div>
<div class="r" style="left:36px;top:405px;width:10px;height:1px;background:#c8c8c8"></div>
<div class="t" style="left:49.88px;top:399px;font-size:12px;line-height:14px;color:#111;transform:scaleX(0.9161);transform-origin:0 0;">Cross-sections</div>
<div class="r" style="left:36px;top:427px;width:10px;height:1px;background:#c8c8c8"></div>
<div class="t" style="left:49.88px;top:421px;font-size:12px;line-height:14px;color:#111;transform:scaleX(0.9643);transform-origin:0 0;">Materials &amp; models</div>
<div class="r" style="left:36px;top:449px;width:10px;height:1px;background:#c8c8c8"></div>
<div class="t" style="left:49.88px;top:443px;font-size:12px;line-height:14px;color:#111;transform:scaleX(0.9548);transform-origin:0 0;">Settings</div>
<div class="r" style="left:36px;top:471px;width:10px;height:1px;background:#c8c8c8"></div>
<div class="t" style="left:49.88px;top:465px;font-size:12px;line-height:14px;color:#111;transform:scaleX(0.9446);transform-origin:0 0;">Project data</div>
<div class="r" style="left:36px;top:493px;width:10px;height:1px;background:#c8c8c8"></div>
<div class="t" style="left:49.88px;top:487px;font-size:12px;line-height:14px;color:#111;transform:scaleX(0.9496);transform-origin:0 0;">Report Preview/Print</div>
<div class="t" style="left:9.98px;top:730px;font-size:12px;line-height:14px;color:#111;transform:scaleX(0.8244);transform-origin:0 0;">ULS:</div>
<svg style="left:37.4px;top:728.4px" width="16.0" height="16.0" viewBox="-8.0 -8.0 16.0 16.0"><circle r="7.5" fill="#5bc44a"/><circle r="6.5" fill="none" stroke="#7fd86c" stroke-width="0.8"/><path d="M-3.75 0.00 L-0.75 3.00 L4.12 -3.00" fill="none" stroke="#fff" stroke-width="2.85" stroke-linecap="round" stroke-linejoin="round"/></svg>
<div class="r" style="left:16px;top:748px;width:212.5px;height:104px;background:#fff;border:1px solid #8a8a8a"></div>
<div class="r" style="left:17px;top:749px;width:210.5px;height:26px;background:linear-gradient(180deg,#8a8a8a 0%,#5c5c5c 40%,#181818 47%,#101010 72%,#3c3c3c 100%);"></div>
<div class="r" style="left:17px;top:775px;width:2px;height:76px;background:#d8d8d8"></div>
<div class="r" style="left:102.5px;top:749px;width:3px;height:26px;background:linear-gradient(90deg,#2a2a2a 0,#2a2a2a 1px,#7a7a7a 1px,#7a7a7a 2px,#2a2a2a 2px)"></div>
<div class="r" style="left:103.5px;top:775px;width:1px;height:76px;background:#d0d0d0"></div>
<div class="r" style="left:126.5px;top:749px;width:3px;height:26px;background:linear-gradient(90deg,#2a2a2a 0,#2a2a2a 1px,#7a7a7a 1px,#7a7a7a 2px,#2a2a2a 2px)"></div>
<div class="r" style="left:127.5px;top:775px;width:1px;height:76px;background:#d0d0d0"></div>
<div class="r" style="left:191.5px;top:749px;width:3px;height:26px;background:linear-gradient(90deg,#2a2a2a 0,#2a2a2a 1px,#7a7a7a 1px,#7a7a7a 2px,#2a2a2a 2px)"></div>
<div class="r" style="left:192.5px;top:775px;width:1px;height:76px;background:#d0d0d0"></div>
<div class="r" style="left:18px;top:800px;width:209.5px;height:1px;background:#d0d0d0"></div>
<div class="r" style="left:18px;top:825px;width:209.5px;height:1px;background:#d0d0d0"></div>
<div class="r" style="left:18px;top:850px;width:209.5px;height:1px;background:#d0d0d0"></div>
<div class="t" style="left:20.78px;top:755px;font-size:12px;line-height:14px;color:#fff;transform:scaleX(0.9828);transform-origin:0 0;">Check item</div>
<div class="t" style="left:132.28px;top:755px;font-size:12px;line-height:14px;font-weight:700;color:#fff;transform:scaleX(0.9838);transform-origin:0 0;">Utilization</div>
<div class="t" style="left:20.78px;top:781px;font-size:12px;line-height:14px;color:#111;transform:scaleX(0.9794);transform-origin:0 0;">Concrete</div>
<div class="t" style="left:108.28px;top:781px;font-size:12px;line-height:14px;color:#111;transform:scaleX(0.9450);transform-origin:0 0;">C1</div>
<div class="t" style="left:132.28px;top:781px;font-size:12px;line-height:14px;color:#111;transform:scaleX(0.9256);transform-origin:0 0;">40.3%</div>
<svg style="left:203.0px;top:779.5px" width="16.0" height="16.0" viewBox="-8.0 -8.0 16.0 16.0"><circle r="7.5" fill="#5bc44a"/><circle r="6.5" fill="none" stroke="#7fd86c" stroke-width="0.8"/><path d="M-3.75 0.00 L-0.75 3.00 L4.12 -3.00" fill="none" stroke="#fff" stroke-width="2.85" stroke-linecap="round" stroke-linejoin="round"/></svg>
<div class="t" style="left:20.78px;top:806px;font-size:12px;line-height:14px;color:#111;transform:scaleX(0.9904);transform-origin:0 0;">Reinforcement</div>
<div class="t" style="left:108.28px;top:806px;font-size:12px;line-height:14px;color:#111;transform:scaleX(0.9450);transform-origin:0 0;">C1</div>
<div class="t" style="left:132.28px;top:806px;font-size:12px;line-height:14px;color:#111;transform:scaleX(0.9256);transform-origin:0 0;">98.6%</div>
<svg style="left:203.0px;top:804.5px" width="16.0" height="16.0" viewBox="-8.0 -8.0 16.0 16.0"><circle r="7.5" fill="#5bc44a"/><circle r="6.5" fill="none" stroke="#7fd86c" stroke-width="0.8"/><path d="M-3.75 0.00 L-0.75 3.00 L4.12 -3.00" fill="none" stroke="#fff" stroke-width="2.85" stroke-linecap="round" stroke-linejoin="round"/></svg>
<div class="t" style="left:20.78px;top:831px;font-size:12px;line-height:14px;color:#111;transform:scaleX(0.9906);transform-origin:0 0;">Anchorage</div>
<div class="t" style="left:108.28px;top:831px;font-size:12px;line-height:14px;color:#111;transform:scaleX(0.9450);transform-origin:0 0;">C1</div>
<div class="t" style="left:132.28px;top:831px;font-size:12px;line-height:14px;color:#111;transform:scaleX(0.9256);transform-origin:0 0;">99.8%</div>
<svg style="left:203.0px;top:829.5px" width="16.0" height="16.0" viewBox="-8.0 -8.0 16.0 16.0"><circle r="7.5" fill="#5bc44a"/><circle r="6.5" fill="none" stroke="#7fd86c" stroke-width="0.8"/><path d="M-3.75 0.00 L-0.75 3.00 L4.12 -3.00" fill="none" stroke="#fff" stroke-width="2.85" stroke-linecap="round" stroke-linejoin="round"/></svg>
<div class="t" style="left:9.28px;top:858px;font-size:12px;line-height:14px;color:#111;transform:scaleX(0.7688);transform-origin:0 0;">SLS:</div>
<svg style="left:35.4px;top:856.6px" width="16.0" height="16.0" viewBox="-8.0 -8.0 16.0 16.0"><circle r="7.5" fill="#5bc44a"/><circle r="6.5" fill="none" stroke="#7fd86c" stroke-width="0.8"/><path d="M-3.75 0.00 L-0.75 3.00 L4.12 -3.00" fill="none" stroke="#fff" stroke-width="2.85" stroke-linecap="round" stroke-linejoin="round"/></svg>
<div class="r" style="left:16px;top:876px;width:218.5px;height:79px;background:#fff;border:1px solid #8a8a8a"></div>
<div class="r" style="left:17px;top:877px;width:216.5px;height:26px;background:linear-gradient(180deg,#8a8a8a 0%,#5c5c5c 40%,#181818 47%,#101010 72%,#3c3c3c 100%);"></div>
<div class="r" style="left:17px;top:903px;width:2px;height:51px;background:#d8d8d8"></div>
<div class="r" style="left:108.5px;top:877px;width:3px;height:26px;background:linear-gradient(90deg,#2a2a2a 0,#2a2a2a 1px,#7a7a7a 1px,#7a7a7a 2px,#2a2a2a 2px)"></div>
<div class="r" style="left:109.5px;top:903px;width:1px;height:51px;background:#d0d0d0"></div>
<div class="r" style="left:132.5px;top:877px;width:3px;height:26px;background:linear-gradient(90deg,#2a2a2a 0,#2a2a2a 1px,#7a7a7a 1px,#7a7a7a 2px,#2a2a2a 2px)"></div>
<div class="r" style="left:133.5px;top:903px;width:1px;height:51px;background:#d0d0d0"></div>
<div class="r" style="left:197.5px;top:877px;width:3px;height:26px;background:linear-gradient(90deg,#2a2a2a 0,#2a2a2a 1px,#7a7a7a 1px,#7a7a7a 2px,#2a2a2a 2px)"></div>
<div class="r" style="left:198.5px;top:903px;width:1px;height:51px;background:#d0d0d0"></div>
<div class="r" style="left:18px;top:928px;width:215.5px;height:1px;background:#d0d0d0"></div>
<div class="r" style="left:18px;top:953px;width:215.5px;height:1px;background:#d0d0d0"></div>
<div class="t" style="left:20.78px;top:883px;font-size:12px;line-height:14px;color:#fff;transform:scaleX(0.9828);transform-origin:0 0;">Check item</div>
<div class="t" style="left:138.28px;top:883px;font-size:12px;line-height:14px;font-weight:700;color:#fff;transform:scaleX(0.9838);transform-origin:0 0;">Utilization</div>
<div class="t" style="left:20.78px;top:909px;font-size:12px;line-height:14px;color:#111;transform:scaleX(0.9823);transform-origin:0 0;">Stress limitation</div>
<div class="t" style="left:114.28px;top:909px;font-size:12px;line-height:14px;color:#111;transform:scaleX(0.9450);transform-origin:0 0;">C3</div>
<div class="t" style="left:138.28px;top:909px;font-size:12px;line-height:14px;color:#111;transform:scaleX(0.9256);transform-origin:0 0;">90.5%</div>
<svg style="left:209.0px;top:907.5px" width="16.0" height="16.0" viewBox="-8.0 -8.0 16.0 16.0"><circle r="7.5" fill="#5bc44a"/><circle r="6.5" fill="none" stroke="#7fd86c" stroke-width="0.8"/><path d="M-3.75 0.00 L-0.75 3.00 L4.12 -3.00" fill="none" stroke="#fff" stroke-width="2.85" stroke-linecap="round" stroke-linejoin="round"/></svg>
<div class="t" style="left:20.78px;top:934px;font-size:12px;line-height:14px;color:#111;transform:scaleX(0.9970);transform-origin:0 0;">Crack width</div>
<div class="t" style="left:114.28px;top:934px;font-size:12px;line-height:14px;color:#111;transform:scaleX(0.9450);transform-origin:0 0;">C2</div>
<div class="t" style="left:138.28px;top:934px;font-size:12px;line-height:14px;color:#111;transform:scaleX(0.9256);transform-origin:0 0;">83.5%</div>
<svg style="left:209.0px;top:932.5px" width="16.0" height="16.0" viewBox="-8.0 -8.0 16.0 16.0"><circle r="7.5" fill="#5bc44a"/><circle r="6.5" fill="none" stroke="#7fd86c" stroke-width="0.8"/><path d="M-3.75 0.00 L-0.75 3.00 L4.12 -3.00" fill="none" stroke="#fff" stroke-width="2.85" stroke-linecap="round" stroke-linejoin="round"/></svg>
<div class="t" style="left:442.52px;top:184px;font-size:13px;line-height:15px;color:#111;transform:scaleX(1.0128);transform-origin:0 0;">Results for: GB2</div>
<svg style="left:0;top:0" width="1282" height="1043" viewBox="0 0 1282 1043">
<line x1="461" y1="224.5" x2="528" y2="224.5" stroke="#d27c7c" stroke-width="1"/>
<line x1="461" y1="266.5" x2="528" y2="266.5" stroke="#d27c7c" stroke-width="1"/>
<line x1="461" y1="287.5" x2="528" y2="287.5" stroke="#d27c7c" stroke-width="1"/>
<line x1="461" y1="308.5" x2="528" y2="308.5" stroke="#d27c7c" stroke-width="1"/>
<line x1="461" y1="350.5" x2="528" y2="350.5" stroke="#d27c7c" stroke-width="1"/>
<line x1="461" y1="362.5" x2="528" y2="362.5" stroke="#d27c7c" stroke-width="1"/>
<line x1="461" y1="370.5" x2="528" y2="370.5" stroke="#d27c7c" stroke-width="1"/>
<line x1="461" y1="375.5" x2="528" y2="375.5" stroke="#d27c7c" stroke-width="1"/>
<line x1="461" y1="388.5" x2="528" y2="388.5" stroke="#d27c7c" stroke-width="1"/>
<line x1="461" y1="391.5" x2="528" y2="391.5" stroke="#d27c7c" stroke-width="1"/>
<line x1="461" y1="412.5" x2="528" y2="412.5" stroke="#d27c7c" stroke-width="1"/>
<line x1="461" y1="433.5" x2="528" y2="433.5" stroke="#d27c7c" stroke-width="1"/>
<line x1="461" y1="454.5" x2="528" y2="454.5" stroke="#d27c7c" stroke-width="1"/>
<line x1="461" y1="475.5" x2="528" y2="475.5" stroke="#d27c7c" stroke-width="1"/>
<line x1="461" y1="496.5" x2="528" y2="496.5" stroke="#d27c7c" stroke-width="1"/>
<line x1="461" y1="517.5" x2="528" y2="517.5" stroke="#d27c7c" stroke-width="1"/>
<line x1="514" y1="329.5" x2="528" y2="329.5" stroke="#d27c7c" stroke-width="1"/>
<path d="M461 338.5 H520 Q526.5 338.5 526.5 345 V412" fill="none" stroke="#d27c7c" stroke-width="1"/>
<line x1="462" y1="209" x2="462" y2="522" stroke="#d27c7c" stroke-width="1"/>
<line x1="526.8" y1="209" x2="526.8" y2="522" stroke="#d27c7c" stroke-width="1"/>
<line x1="458" y1="405.5" x2="481" y2="411" stroke="#d27c7c" stroke-width="1"/>
<rect x="460" y="246" width="3.2" height="110" fill="#8a84d6" fill-opacity="0.8"/>
<rect x="459.5" y="324" width="3.5" height="12" fill="#1a1aff"/>
<rect x="461" y="356" width="2" height="80" fill="#a6a0b8" fill-opacity="0.6"/>
<line x1="458.7" y1="247.9" x2="465.9" y2="253.2" stroke="#333" stroke-width="0.8"/>
<line x1="458.7" y1="258" x2="465.4" y2="262.8" stroke="#333" stroke-width="0.8"/>
<line x1="457.7" y1="268" x2="466.8" y2="273.8" stroke="#333" stroke-width="0.8"/>
<line x1="457.7" y1="278.1" x2="466.8" y2="283.9" stroke="#333" stroke-width="0.8"/>
<line x1="456.3" y1="287.2" x2="467.8" y2="293.5" stroke="#333" stroke-width="0.8"/>
<line x1="460.6" y1="290" x2="467.8" y2="293.8" stroke="#333" stroke-width="0.8"/>
<line x1="455.8" y1="297.2" x2="468.3" y2="303.9" stroke="#333" stroke-width="0.8"/>
<line x1="455.8" y1="308.2" x2="468.3" y2="313.5" stroke="#333" stroke-width="0.8"/>
<line x1="454.9" y1="317.3" x2="467.3" y2="322.6" stroke="#333" stroke-width="0.8"/>
<line x1="443.4" y1="320.2" x2="460.6" y2="328.4" stroke="#333" stroke-width="0.8"/>
<line x1="452" y1="335" x2="471.6" y2="345.6" stroke="#333" stroke-width="0.8"/>
<line x1="469.7" y1="335" x2="480.7" y2="340.8" stroke="#333" stroke-width="0.8"/>
<line x1="453" y1="347.3" x2="470.7" y2="353.6" stroke="#333" stroke-width="0.8"/>
<line x1="458.2" y1="359" x2="467.3" y2="362.4" stroke="#333" stroke-width="0.8"/>
<line x1="460" y1="370" x2="464" y2="372" stroke="#333" stroke-width="0.8"/>
<line x1="461" y1="380" x2="463" y2="382" stroke="#333" stroke-width="0.8"/>
<rect x="458" y="209" width="72.5" height="313" fill="none" stroke="#000" stroke-width="2.2"/>
<line x1="457" y1="245.5" x2="531.5" y2="245.5" stroke="#2a0e0e" stroke-width="3"/>
<line x1="457" y1="365.8" x2="531.5" y2="365.8" stroke="#000" stroke-width="3"/>
<line x1="457" y1="486" x2="531.5" y2="486" stroke="#000" stroke-width="3"/>
<circle cx="462" cy="336" r="3.2" fill="#f7901e"/>
</svg>
<div class="t" style="left:461.84px;top:323px;font-size:11px;line-height:12px;font-weight:700;color:#f7901e;transform:scaleX(1.0128);transform-origin:0 0;">0.251 mm</div>
<div class="t" style="left:794.09px;top:185px;font-size:13.5px;line-height:15px;color:#111;transform:scaleX(1.0196);transform-origin:0 0;">W</div>
<div class="t" style="left:782.80px;top:203px;font-size:10px;line-height:11px;color:#111;transform:scaleX(1.0802);transform-origin:0 0;">[mm]</div>
<div class="r" style="left:781px;top:242px;width:27px;height:35px;background:#1818fc"></div>
<div class="r" style="left:781px;top:277px;width:27px;height:34px;background:#2e2eef"></div>
<div class="r" style="left:781px;top:311px;width:27px;height:35px;background:#4444e3"></div>
<div class="r" style="left:781px;top:346px;width:27px;height:34px;background:#5a5adb"></div>
<div class="r" style="left:781px;top:380px;width:27px;height:35px;background:#7373d6"></div>
<div class="r" style="left:781px;top:415px;width:27px;height:35px;background:#8c8ed0"></div>
<div class="r" style="left:781px;top:450px;width:27px;height:34px;background:#a6a9c8"></div>
<div class="r" style="left:781px;top:484px;width:27px;height:35px;background:#c3c8c4"></div>
<div class="r" style="left:780px;top:241px;width:29px;height:279px;border:1px solid #222"></div>
<div class="t" style="left:743.36px;top:236px;font-size:10.7px;line-height:12px;color:#111;transform:scaleX(1.0093);transform-origin:0 0;">0.251</div>
<div class="t" style="left:743.36px;top:271px;font-size:10.7px;line-height:12px;color:#111;transform:scaleX(1.0093);transform-origin:0 0;">0.219</div>
<div class="t" style="left:743.36px;top:305px;font-size:10.7px;line-height:12px;color:#111;transform:scaleX(1.0093);transform-origin:0 0;">0.188</div>
<div class="t" style="left:743.36px;top:340px;font-size:10.7px;line-height:12px;color:#111;transform:scaleX(1.0093);transform-origin:0 0;">0.157</div>
<div class="t" style="left:743.36px;top:374px;font-size:10.7px;line-height:12px;color:#111;transform:scaleX(1.0093);transform-origin:0 0;">0.125</div>
<div class="t" style="left:743.36px;top:409px;font-size:10.7px;line-height:12px;color:#111;transform:scaleX(1.0093);transform-origin:0 0;">0.094</div>
<div class="t" style="left:743.36px;top:444px;font-size:10.7px;line-height:12px;color:#111;transform:scaleX(1.0093);transform-origin:0 0;">0.063</div>
<div class="t" style="left:743.36px;top:478px;font-size:10.7px;line-height:12px;color:#111;transform:scaleX(1.0093);transform-origin:0 0;">0.031</div>
<div class="t" style="left:743.36px;top:513px;font-size:10.7px;line-height:12px;color:#111;transform:scaleX(1.0093);transform-origin:0 0;">0.000</div>
<div class="r" style="left:272px;top:550px;width:582px;height:25px;background:#bebebe;border-bottom:1px solid #888"></div>
<div class="r" style="left:272px;top:575px;width:582px;height:454px;background:#fff"></div>
<div class="r" style="left:275px;top:557px;width:61px;height:18px;background:linear-gradient(180deg,#fbfbfb,#e2e2e2);border:1px solid #8e8e8e;border-bottom:none;border-radius:3px 3px 0 0"></div>
<div class="t" style="left:275.00px;top:558px;font-size:12px;line-height:14px;color:#111;width:61px;text-align:center;">Summary</div>
<div class="r" style="left:338px;top:557px;width:55px;height:18px;background:linear-gradient(180deg,#fbfbfb,#e2e2e2);border:1px solid #8e8e8e;border-bottom:none;border-radius:3px 3px 0 0"></div>
<div class="t" style="left:338.00px;top:558px;font-size:12px;line-height:14px;color:#111;width:55px;text-align:center;">Strength</div>
<div class="r" style="left:395px;top:557px;width:68px;height:18px;background:linear-gradient(180deg,#fbfbfb,#e2e2e2);border:1px solid #8e8e8e;border-bottom:none;border-radius:3px 3px 0 0"></div>
<div class="t" style="left:395.00px;top:558px;font-size:12px;line-height:14px;color:#111;width:68px;text-align:center;">Anchorage</div>
<div class="r" style="left:465px;top:557px;width:38px;height:18px;background:linear-gradient(180deg,#fbfbfb,#e2e2e2);border:1px solid #8e8e8e;border-bottom:none;border-radius:3px 3px 0 0"></div>
<div class="t" style="left:465.00px;top:558px;font-size:12px;line-height:14px;color:#111;width:38px;text-align:center;">Stress</div>
<div class="r" style="left:503px;top:556px;width:49px;height:20px;background:#fff;border:1px solid #888;border-bottom:none;border-radius:3px 3px 0 0"></div>
<div class="t" style="left:503.00px;top:558px;font-size:12px;line-height:14px;color:#111;width:49px;text-align:center;">Crack</div>
<div class="r" style="left:553px;top:557px;width:60px;height:18px;background:linear-gradient(180deg,#fbfbfb,#e2e2e2);border:1px solid #8e8e8e;border-bottom:none;border-radius:3px 3px 0 0"></div>
<div class="t" style="left:553.00px;top:558px;font-size:12px;line-height:14px;color:#111;width:60px;text-align:center;">Deflection</div>
<div class="r" style="left:615px;top:557px;width:56px;height:18px;background:linear-gradient(180deg,#fbfbfb,#e2e2e2);border:1px solid #8e8e8e;border-bottom:none;border-radius:3px 3px 0 0"></div>
<div class="t" style="left:615.00px;top:558px;font-size:12px;line-height:14px;color:#111;width:56px;text-align:center;">Auxiliary</div>
<div class="t" style="left:276.75px;top:581px;font-size:12.5px;line-height:14px;font-weight:700;color:#f26522;transform:scaleX(1.0227);transform-origin:0 0;">Results presented for: C2 (P100.0%, V100.0%)</div>
<div class="r" style="left:272px;top:599px;width:423.5px;height:205px;background:#fff;border:1px solid #7a7a7a;border-top:none"></div>
<div class="r" style="left:272px;top:599px;width:423.5px;height:27px;background:linear-gradient(180deg,#8a8a8a 0%,#5c5c5c 40%,#181818 47%,#101010 72%,#3c3c3c 100%);border:1px solid #2a2a2a;border-top:none;"></div>
<div class="r" style="left:296px;top:600px;width:3px;height:26px;background:linear-gradient(90deg,#2a2a2a 0,#2a2a2a 1px,#7a7a7a 1px,#7a7a7a 2px,#2a2a2a 2px)"></div>
<div class="r" style="left:382.5px;top:600px;width:3px;height:26px;background:linear-gradient(90deg,#2a2a2a 0,#2a2a2a 1px,#7a7a7a 1px,#7a7a7a 2px,#2a2a2a 2px)"></div>
<div class="r" style="left:432.5px;top:600px;width:3px;height:26px;background:linear-gradient(90deg,#2a2a2a 0,#2a2a2a 1px,#7a7a7a 1px,#7a7a7a 2px,#2a2a2a 2px)"></div>
<div class="r" style="left:483px;top:600px;width:3px;height:26px;background:linear-gradient(90deg,#2a2a2a 0,#2a2a2a 1px,#7a7a7a 1px,#7a7a7a 2px,#2a2a2a 2px)"></div>
<div class="r" style="left:532px;top:600px;width:3px;height:26px;background:linear-gradient(90deg,#2a2a2a 0,#2a2a2a 1px,#7a7a7a 1px,#7a7a7a 2px,#2a2a2a 2px)"></div>
<div class="r" style="left:582px;top:600px;width:3px;height:26px;background:linear-gradient(90deg,#2a2a2a 0,#2a2a2a 1px,#7a7a7a 1px,#7a7a7a 2px,#2a2a2a 2px)"></div>
<div class="r" style="left:658px;top:600px;width:3px;height:26px;background:linear-gradient(90deg,#2a2a2a 0,#2a2a2a 1px,#7a7a7a 1px,#7a7a7a 2px,#2a2a2a 2px)"></div>
<div class="r" style="left:272px;top:599px;width:423.5px;height:1px;background:#555"></div>
<div class="r" style="left:273px;top:627px;width:23px;height:24px;background:#e4e4e4;border:1px solid #f6f6f6"></div>
<div class="r" style="left:297px;top:626px;width:397.5px;height:25px;background:#efefef"></div>
<div class="r" style="left:272px;top:651px;width:422.5px;height:1px;background:#d2d2d2"></div>
<div class="r" style="left:273px;top:652px;width:23px;height:24px;background:#e4e4e4;border:1px solid #f6f6f6"></div>
<div class="r" style="left:272px;top:676px;width:422.5px;height:1px;background:#d2d2d2"></div>
<div class="r" style="left:273px;top:677px;width:23px;height:24px;background:#e4e4e4;border:1px solid #f6f6f6"></div>
<div class="r" style="left:272px;top:701px;width:422.5px;height:1px;background:#d2d2d2"></div>
<div class="r" style="left:273px;top:702px;width:23px;height:24px;background:#e4e4e4;border:1px solid #f6f6f6"></div>
<div class="r" style="left:272px;top:726px;width:422.5px;height:1px;background:#d2d2d2"></div>
<div class="r" style="left:273px;top:727px;width:23px;height:24px;background:#e4e4e4;border:1px solid #f6f6f6"></div>
<div class="r" style="left:272px;top:751px;width:422.5px;height:1px;background:#d2d2d2"></div>
<div class="r" style="left:273px;top:752px;width:23px;height:24px;background:#e4e4e4;border:1px solid #f6f6f6"></div>
<div class="r" style="left:272px;top:776px;width:422.5px;height:1px;background:#d2d2d2"></div>
<div class="r" style="left:273px;top:777px;width:23px;height:24px;background:#e4e4e4;border:1px solid #f6f6f6"></div>
<div class="r" style="left:272px;top:801px;width:422.5px;height:1px;background:#d2d2d2"></div>
<div class="r" style="left:297px;top:626px;width:1px;height:176px;background:#d2d2d2"></div>
<div class="r" style="left:383.5px;top:626px;width:1px;height:176px;background:#d2d2d2"></div>
<div class="r" style="left:433.5px;top:626px;width:1px;height:176px;background:#d2d2d2"></div>
<div class="r" style="left:484px;top:626px;width:1px;height:176px;background:#d2d2d2"></div>
<div class="r" style="left:533px;top:626px;width:1px;height:176px;background:#d2d2d2"></div>
<div class="r" style="left:583px;top:626px;width:1px;height:176px;background:#d2d2d2"></div>
<div class="r" style="left:659px;top:626px;width:1px;height:176px;background:#d2d2d2"></div>
<div class="r" style="left:272px;top:802px;width:423.5px;height:2px;background:#888"></div>
<div class="t" style="left:301.78px;top:607px;font-size:12px;line-height:14px;color:#fff;transform:scaleX(0.9866);transform-origin:0 0;">Reinforcement</div>
<div class="t" style="left:388.28px;top:607px;font-size:12px;line-height:14px;font-weight:700;color:#fff;transform:scaleX(1.0333);transform-origin:0 0;">X [m]</div>
<div class="t" style="left:438.28px;top:607px;font-size:12px;line-height:14px;font-weight:700;color:#fff;transform:scaleX(1.0570);transform-origin:0 0;">Z [m]</div>
<div class="t" style="left:488.78px;top:607px;font-size:12px;line-height:14px;color:#fff;transform:scaleX(1.1119);transform-origin:0 0;">w [mm]</div>
<div class="t" style="left:537.78px;top:607px;font-size:12px;line-height:14px;color:#fff;transform:scaleX(1.0750);transform-origin:0 0;">sr [mm]</div>
<div class="t" style="left:587.78px;top:607px;font-size:12px;line-height:14px;color:#fff;transform:scaleX(1.0577);transform-origin:0 0;">w / wlim [%]</div>
<div class="t" style="left:301.78px;top:633px;font-size:12px;line-height:14px;color:#111;transform:scaleX(0.9161);transform-origin:0 0;">GB2</div>
<div class="t" style="left:383.50px;top:633px;font-size:12px;line-height:14px;color:#111;width:46.0px;text-align:right;">-0.31</div>
<div class="t" style="left:433.50px;top:633px;font-size:12px;line-height:14px;color:#111;width:46.5px;text-align:right;">0.29</div>
<div class="t" style="left:484.00px;top:633px;font-size:12px;line-height:14px;font-weight:700;color:#111;width:45px;text-align:right;">0.251</div>
<div class="t" style="left:533.00px;top:633px;font-size:12px;line-height:14px;color:#111;width:46px;text-align:right;">-</div>
<div class="t" style="left:583.00px;top:633px;font-size:12px;line-height:14px;font-weight:700;color:#111;width:72px;text-align:right;">83.5</div>
<svg style="left:669.8px;top:630.5px" width="16.0" height="16.0" viewBox="-8.0 -8.0 16.0 16.0"><circle r="7.5" fill="#5bc44a"/><circle r="6.5" fill="none" stroke="#7fd86c" stroke-width="0.8"/><path d="M-3.75 0.00 L-0.75 3.00 L4.12 -3.00" fill="none" stroke="#fff" stroke-width="2.85" stroke-linecap="round" stroke-linejoin="round"/></svg>
<div class="t" style="left:301.78px;top:658px;font-size:12px;line-height:14px;color:#111;transform:scaleX(0.9993);transform-origin:0 0;">ST1</div>
<div class="t" style="left:383.50px;top:658px;font-size:12px;line-height:14px;color:#111;width:46.0px;text-align:right;">-0.32</div>
<div class="t" style="left:433.50px;top:658px;font-size:12px;line-height:14px;color:#111;width:46.5px;text-align:right;">0.75</div>
<div class="t" style="left:484.00px;top:658px;font-size:12px;line-height:14px;font-weight:700;color:#111;width:45px;text-align:right;">0.187</div>
<div class="t" style="left:533.00px;top:658px;font-size:12px;line-height:14px;color:#111;width:46px;text-align:right;">-</div>
<div class="t" style="left:583.00px;top:658px;font-size:12px;line-height:14px;font-weight:700;color:#111;width:72px;text-align:right;">70.3</div>
<svg style="left:669.8px;top:655.5px" width="16.0" height="16.0" viewBox="-8.0 -8.0 16.0 16.0"><circle r="7.5" fill="#5bc44a"/><circle r="6.5" fill="none" stroke="#7fd86c" stroke-width="0.8"/><path d="M-3.75 0.00 L-0.75 3.00 L4.12 -3.00" fill="none" stroke="#fff" stroke-width="2.85" stroke-linecap="round" stroke-linejoin="round"/></svg>
<div class="t" style="left:301.78px;top:683px;font-size:12px;line-height:14px;color:#111;transform:scaleX(0.9993);transform-origin:0 0;">ST2</div>
<div class="t" style="left:383.50px;top:683px;font-size:12px;line-height:14px;color:#111;width:46.0px;text-align:right;">-0.40</div>
<div class="t" style="left:433.50px;top:683px;font-size:12px;line-height:14px;color:#111;width:46.5px;text-align:right;">0.27</div>
<div class="t" style="left:484.00px;top:683px;font-size:12px;line-height:14px;font-weight:700;color:#111;width:45px;text-align:right;">0.202</div>
<div class="t" style="left:533.00px;top:683px;font-size:12px;line-height:14px;color:#111;width:46px;text-align:right;">-</div>
<div class="t" style="left:583.00px;top:683px;font-size:12px;line-height:14px;font-weight:700;color:#111;width:72px;text-align:right;">67.5</div>
<svg style="left:669.8px;top:680.5px" width="16.0" height="16.0" viewBox="-8.0 -8.0 16.0 16.0"><circle r="7.5" fill="#5bc44a"/><circle r="6.5" fill="none" stroke="#7fd86c" stroke-width="0.8"/><path d="M-3.75 0.00 L-0.75 3.00 L4.12 -3.00" fill="none" stroke="#fff" stroke-width="2.85" stroke-linecap="round" stroke-linejoin="round"/></svg>
<div class="t" style="left:301.78px;top:708px;font-size:12px;line-height:14px;color:#111;transform:scaleX(0.9161);transform-origin:0 0;">GB3</div>
<div class="t" style="left:383.50px;top:708px;font-size:12px;line-height:14px;color:#111;width:46.0px;text-align:right;">-0.44</div>
<div class="t" style="left:433.50px;top:708px;font-size:12px;line-height:14px;color:#111;width:46.5px;text-align:right;">0.03</div>
<div class="t" style="left:484.00px;top:708px;font-size:12px;line-height:14px;font-weight:700;color:#111;width:45px;text-align:right;">0.069</div>
<div class="t" style="left:533.00px;top:708px;font-size:12px;line-height:14px;color:#111;width:46px;text-align:right;">258</div>
<div class="t" style="left:583.00px;top:708px;font-size:12px;line-height:14px;font-weight:700;color:#111;width:72px;text-align:right;">22.9</div>
<svg style="left:669.8px;top:705.5px" width="16.0" height="16.0" viewBox="-8.0 -8.0 16.0 16.0"><circle r="7.5" fill="#5bc44a"/><circle r="6.5" fill="none" stroke="#7fd86c" stroke-width="0.8"/><path d="M-3.75 0.00 L-0.75 3.00 L4.12 -3.00" fill="none" stroke="#fff" stroke-width="2.85" stroke-linecap="round" stroke-linejoin="round"/></svg>
<div class="t" style="left:301.78px;top:733px;font-size:12px;line-height:14px;color:#111;transform:scaleX(0.9161);transform-origin:0 0;">GB4</div>
<div class="t" style="left:383.50px;top:733px;font-size:12px;line-height:14px;color:#111;width:46.0px;text-align:right;">-0.43</div>
<div class="t" style="left:433.50px;top:733px;font-size:12px;line-height:14px;color:#111;width:46.5px;text-align:right;">0.26</div>
<div class="t" style="left:484.00px;top:733px;font-size:12px;line-height:14px;font-weight:700;color:#111;width:45px;text-align:right;">0.062</div>
<div class="t" style="left:533.00px;top:733px;font-size:12px;line-height:14px;color:#111;width:46px;text-align:right;">-</div>
<div class="t" style="left:583.00px;top:733px;font-size:12px;line-height:14px;font-weight:700;color:#111;width:72px;text-align:right;">20.6</div>
<svg style="left:669.8px;top:730.5px" width="16.0" height="16.0" viewBox="-8.0 -8.0 16.0 16.0"><circle r="7.5" fill="#5bc44a"/><circle r="6.5" fill="none" stroke="#7fd86c" stroke-width="0.8"/><path d="M-3.75 0.00 L-0.75 3.00 L4.12 -3.00" fill="none" stroke="#fff" stroke-width="2.85" stroke-linecap="round" stroke-linejoin="round"/></svg>
<div class="t" style="left:301.78px;top:758px;font-size:12px;line-height:14px;color:#111;transform:scaleX(0.9161);transform-origin:0 0;">GB4</div>
<div class="t" style="left:383.50px;top:758px;font-size:12px;line-height:14px;color:#111;width:46.0px;text-align:right;">0.26</div>
<div class="t" style="left:433.50px;top:758px;font-size:12px;line-height:14px;color:#111;width:46.5px;text-align:right;">0.26</div>
<div class="t" style="left:484.00px;top:758px;font-size:12px;line-height:14px;font-weight:700;color:#111;width:45px;text-align:right;">0.061</div>
<div class="t" style="left:533.00px;top:758px;font-size:12px;line-height:14px;color:#111;width:46px;text-align:right;">211</div>
<div class="t" style="left:583.00px;top:758px;font-size:12px;line-height:14px;color:#111;width:72px;text-align:right;">20.4</div>
<svg style="left:669.8px;top:755.5px" width="16.0" height="16.0" viewBox="-8.0 -8.0 16.0 16.0"><circle r="7.5" fill="#5bc44a"/><circle r="6.5" fill="none" stroke="#7fd86c" stroke-width="0.8"/><path d="M-3.75 0.00 L-0.75 3.00 L4.12 -3.00" fill="none" stroke="#fff" stroke-width="2.85" stroke-linecap="round" stroke-linejoin="round"/></svg>
<div class="t" style="left:301.78px;top:783px;font-size:12px;line-height:14px;color:#111;transform:scaleX(0.9161);transform-origin:0 0;">GB1</div>
<div class="t" style="left:383.50px;top:783px;font-size:12px;line-height:14px;color:#111;width:46.0px;text-align:right;">0.31</div>
<div class="t" style="left:433.50px;top:783px;font-size:12px;line-height:14px;color:#111;width:46.5px;text-align:right;">0.96</div>
<div class="t" style="left:484.00px;top:783px;font-size:12px;line-height:14px;font-weight:700;color:#111;width:45px;text-align:right;">0.060</div>
<div class="t" style="left:533.00px;top:783px;font-size:12px;line-height:14px;color:#111;width:46px;text-align:right;">71</div>
<div class="t" style="left:583.00px;top:783px;font-size:12px;line-height:14px;font-weight:700;color:#111;width:72px;text-align:right;">20.1</div>
<svg style="left:669.8px;top:780.5px" width="16.0" height="16.0" viewBox="-8.0 -8.0 16.0 16.0"><circle r="7.5" fill="#5bc44a"/><circle r="6.5" fill="none" stroke="#7fd86c" stroke-width="0.8"/><path d="M-3.75 0.00 L-0.75 3.00 L4.12 -3.00" fill="none" stroke="#fff" stroke-width="2.85" stroke-linecap="round" stroke-linejoin="round"/></svg>
<svg style="left:282px;top:635px" width="8" height="11" viewBox="0 0 8 11"><path d="M1 1 L6.5 5.5 L1 10" fill="none" stroke="#8a8a8a" stroke-width="1.6"/></svg>
<div class="t" style="left:271.98px;top:809px;font-size:12px;line-height:14px;color:#111;transform:scaleX(1.0076);transform-origin:0 0;">The crack width is checked in the vicinity of the reinforcement only. No control of cracking is</div>
<div class="t" style="left:271.98px;top:824px;font-size:12px;line-height:14px;color:#111;transform:scaleX(1.0065);transform-origin:0 0;">performed in non-reinforced zones.</div>
<div class="t" style="left:271.98px;top:844px;font-size:12px;line-height:14px;color:#111;transform:scaleX(0.9828);transform-origin:0 0;">The presentation of crack spacing is schematic only. It does not represent the crack spacing</div>
<div class="t" style="left:271.98px;top:859px;font-size:12px;line-height:14px;color:#111;transform:scaleX(1.0224);transform-origin:0 0;">computed for the calculations.</div>
<div class="r" style="left:502.5px;top:552.5px;width:49px;height:27px;border:4px solid #f40000;border-radius:10px"></div>
<div class="r" style="left:292px;top:625px;width:402px;height:26px;border:4px solid #f40000;border-radius:11px"></div>
<svg style="left:873px;top:165px" width="25" height="24" viewBox="0 0 25 24">
<defs><linearGradient id="ge" x1="0" y1="0" x2="0" y2="1"><stop offset="0" stop-color="#f0f0f0"/><stop offset="1" stop-color="#d2d2d2"/></linearGradient></defs>
<rect x="0.5" y="0.5" width="23" height="23" fill="url(#ge)" stroke="#a8a8a8"/>
<g stroke="#8a8a8a" stroke-width="1.4" fill="none">
<path d="M6 10 V6 H10 M6 6 L10 10"/><path d="M18 10 V6 H14 M18 6 L14 10"/><path d="M6 14 V18 H10 M6 18 L10 14"/><path d="M18 14 V18 H14 M18 18 L14 14"/>
</g></svg>
<svg style="left:0;top:0" width="1282" height="1043" viewBox="0 0 1282 1043">
<rect x="1031.3" y="170.8" width="200.2" height="856.8" fill="none" stroke="#000" stroke-width="2.6"/>
<line x1="1030" y1="270.3" x2="1232.8" y2="270.3" stroke="#000" stroke-width="3"/>
<line x1="1030" y1="599.2" x2="1232.8" y2="599.2" stroke="#000" stroke-width="3"/>
<line x1="1030" y1="927.6" x2="1232.8" y2="927.6" stroke="#000" stroke-width="3"/>
<path d="M1031.3 513.9 H888.3 V685.2 L1031.3 718" fill="none" stroke="#000" stroke-width="2.6"/>
<line x1="977" y1="523.7" x2="1100" y2="523.7" stroke="#6a6ad8" stroke-width="5" stroke-opacity="0.35"/>
<line x1="1120" y1="523.7" x2="1222" y2="523.7" stroke="#6a6ad8" stroke-width="5" stroke-opacity="0.2"/>
<line x1="977" y1="557.4" x2="1068" y2="557.4" stroke="#6a6ad8" stroke-width="5" stroke-opacity="0.35"/>
<line x1="1085" y1="557.4" x2="1222" y2="557.4" stroke="#6a6ad8" stroke-width="5" stroke-opacity="0.15"/>
<line x1="977" y1="591.8" x2="1031" y2="591.8" stroke="#6a6ad8" stroke-width="5" stroke-opacity="0.3"/>
<line x1="1004" y1="626.4" x2="1031" y2="626.4" stroke="#6a6ad8" stroke-width="5" stroke-opacity="0.3"/>
<line x1="1042" y1="613.3" x2="1060" y2="613.3" stroke="#6a6ad8" stroke-width="5" stroke-opacity="0.25"/>
<line x1="920" y1="660.4" x2="1031" y2="660.4" stroke="#6a6ad8" stroke-width="5" stroke-opacity="0.15"/>
<rect x="1040" y="266" width="6" height="224" fill="#8088e0" fill-opacity="0.8"/>
<rect x="1218" y="266" width="4.5" height="235" fill="#9a9ad0" fill-opacity="0.6"/>
<rect x="1041" y="267.5" width="51" height="7.0" fill="#7474e6"/>
<rect x="1092" y="266.6" width="25" height="8.399999999999977" fill="#6060e4"/>
<rect x="1117" y="266.6" width="27" height="8.399999999999977" fill="#4a4ae6"/>
<rect x="1144" y="266.6" width="78" height="8.399999999999977" fill="#5656e4"/>
<rect x="1045" y="322.5" width="47" height="10.5" fill="#4242e6"/>
<rect x="1092" y="322.5" width="130" height="10.0" fill="#5c5ce0"/>
<rect x="1045" y="378.7" width="47" height="12.100000000000023" fill="#2424ec"/>
<rect x="1092" y="379.5" width="25" height="10.5" fill="#4848e6"/>
<rect x="1117" y="380" width="27" height="9.5" fill="#5a5ae2"/>
<rect x="1144" y="381" width="26" height="8" fill="#6262de"/>
<rect x="1170" y="381.5" width="52" height="6.5" fill="#7878dc"/>
<rect x="1045" y="436.5" width="20" height="10.5" fill="#4a4ae6"/>
<rect x="1065" y="436.2" width="53" height="11.100000000000023" fill="#2a2aee"/>
<rect x="1118" y="437" width="26" height="9.5" fill="#4a4ae6"/>
<rect x="1144" y="438" width="26" height="8" fill="#6060e0"/>
<rect x="1170" y="438.5" width="26" height="7.0" fill="#7070de"/>
<rect x="1196" y="439" width="26" height="6" fill="#8484dc"/>
<rect x="1035" y="489.2" width="15" height="27.30000000000001" fill="#1212fc"/>
<rect x="1050" y="493" width="18" height="11" fill="#4848e8"/>
<rect x="1068" y="497" width="154" height="4.5" fill="#a8a8dc"/>
<rect x="1011.3" y="527" width="12.0" height="23" fill="#2c2cf0"/>
<rect x="1012.5" y="550" width="9.5" height="26" fill="#6464e0"/>
<rect x="1014" y="576" width="7" height="25" fill="#9a9ae0"/>
<rect x="1038.7" y="527" width="8.399999999999864" height="45" fill="#6868e6"/>
<rect x="1039.5" y="572" width="6.5" height="31" fill="#9a9ade"/>
<line x1="1086" y1="523.7" x2="1222" y2="523.7" stroke="#9c8080" stroke-width="3" stroke-opacity="0.45"/>
<line x1="1086" y1="557.4" x2="1222" y2="557.4" stroke="#9c8080" stroke-width="3" stroke-opacity="0.45"/>
<line x1="1086" y1="591.8" x2="1222" y2="591.8" stroke="#9c8080" stroke-width="3" stroke-opacity="0.45"/>
<line x1="1092" y1="613.3" x2="1222" y2="613.3" stroke="#9c8080" stroke-width="3" stroke-opacity="0.45"/>
<line x1="1086" y1="626.4" x2="1222" y2="626.4" stroke="#9c8080" stroke-width="3" stroke-opacity="0.45"/>
<line x1="1086" y1="660.4" x2="1222" y2="660.4" stroke="#9c8080" stroke-width="3" stroke-opacity="0.45"/>
<line x1="897" y1="557.4" x2="977" y2="557.4" stroke="#9c8080" stroke-width="3" stroke-opacity="0.45"/>
<line x1="897" y1="591.8" x2="977" y2="591.8" stroke="#9c8080" stroke-width="3" stroke-opacity="0.45"/>
<line x1="897" y1="626.4" x2="1004" y2="626.4" stroke="#9c8080" stroke-width="3" stroke-opacity="0.45"/>
<line x1="897" y1="523.7" x2="977" y2="523.7" stroke="#9c8080" stroke-width="3" stroke-opacity="0.45"/>
<line x1="1042" y1="213.5" x2="1222" y2="213.5" stroke="#b84040" stroke-width="1" stroke-opacity="0.65"/>
<line x1="1042" y1="269.9" x2="1222" y2="269.9" stroke="#b84040" stroke-width="1" stroke-opacity="0.65"/>
<line x1="1042" y1="327.4" x2="1222" y2="327.4" stroke="#b84040" stroke-width="1" stroke-opacity="0.65"/>
<line x1="1042" y1="384.6" x2="1222" y2="384.6" stroke="#b84040" stroke-width="1" stroke-opacity="0.65"/>
<line x1="1042" y1="442.4" x2="1222" y2="442.4" stroke="#b84040" stroke-width="1" stroke-opacity="0.65"/>
<line x1="1042" y1="499" x2="1222" y2="499" stroke="#b84040" stroke-width="1" stroke-opacity="0.65"/>
<line x1="1042" y1="613.3" x2="1222" y2="613.3" stroke="#b84040" stroke-width="1" stroke-opacity="0.65"/>
<line x1="1042" y1="670.4" x2="1222" y2="670.4" stroke="#b84040" stroke-width="1" stroke-opacity="0.65"/>
<line x1="1042" y1="727.8" x2="1222" y2="727.8" stroke="#b84040" stroke-width="1" stroke-opacity="0.65"/>
<line x1="1042" y1="785" x2="1222" y2="785" stroke="#b84040" stroke-width="1" stroke-opacity="0.65"/>
<line x1="1042" y1="842" x2="1222" y2="842" stroke="#b84040" stroke-width="1" stroke-opacity="0.65"/>
<line x1="1042" y1="899.3" x2="1222" y2="899.3" stroke="#b84040" stroke-width="1" stroke-opacity="0.65"/>
<line x1="1042" y1="956.3" x2="1222" y2="956.3" stroke="#b84040" stroke-width="1" stroke-opacity="0.65"/>
<line x1="1042" y1="1013.2" x2="1222" y2="1013.2" stroke="#b84040" stroke-width="1" stroke-opacity="0.65"/>
<line x1="897" y1="557.4" x2="1222" y2="557.4" stroke="#b84040" stroke-width="1" stroke-opacity="0.75"/>
<line x1="897" y1="591.8" x2="1222" y2="591.8" stroke="#b84040" stroke-width="1" stroke-opacity="0.75"/>
<line x1="897" y1="626.4" x2="1222" y2="626.4" stroke="#b84040" stroke-width="1" stroke-opacity="0.75"/>
<line x1="897" y1="660.4" x2="1222" y2="660.4" stroke="#b84040" stroke-width="1" stroke-opacity="0.75"/>
<path d="M1095 721.8 L913 679 Q900 675 899.7 662 V540 Q899.7 523.7 916 523.7 H1210 Q1220.4 523.7 1220.4 534" fill="none" stroke="#b84040" stroke-opacity="0.65" stroke-width="1"/>
<line x1="897" y1="523.7" x2="916" y2="523.7" stroke="#b84040" stroke-width="1" stroke-opacity="0.65"/>
<line x1="1042.4" y1="171" x2="1042.4" y2="1027" stroke="#b84040" stroke-width="1" stroke-opacity="0.65"/>
<line x1="1220.4" y1="171" x2="1220.4" y2="1027" stroke="#b84040" stroke-width="1" stroke-opacity="0.65"/>
<line x1="988.4" y1="523" x2="988.4" y2="698" stroke="#b84040" stroke-width="1" stroke-opacity="0.65"/>
<line x1="1017.3" y1="523" x2="1017.3" y2="704" stroke="#b84040" stroke-width="1" stroke-opacity="0.65"/>
<line x1="1195" y1="727.8" x2="1222" y2="727.8" stroke="#6a5a5a" stroke-width="1.6" stroke-opacity="0.5"/>
<line x1="1042" y1="785" x2="1119" y2="785" stroke="#6a5a5a" stroke-width="1.6" stroke-opacity="0.6"/>
<line x1="1169" y1="785" x2="1222" y2="785" stroke="#6a5a5a" stroke-width="1.6" stroke-opacity="0.6"/>
<line x1="1042" y1="842" x2="1222" y2="842" stroke="#6a5a5a" stroke-width="1.6" stroke-opacity="0.6"/>
<line x1="1042" y1="899.3" x2="1222" y2="899.3" stroke="#6a5a5a" stroke-width="1.6" stroke-opacity="0.6"/>
<line x1="1079.0" y1="839.5" x2="1082.0" y2="844.5" stroke="#333" stroke-width="0.8"/>
<line x1="1105.0" y1="839.5" x2="1108.0" y2="844.5" stroke="#333" stroke-width="0.8"/>
<line x1="1131.0" y1="839.5" x2="1134.0" y2="844.5" stroke="#333" stroke-width="0.8"/>
<line x1="1157.0" y1="839.5" x2="1160.0" y2="844.5" stroke="#333" stroke-width="0.8"/>
<line x1="1183.0" y1="839.5" x2="1186.0" y2="844.5" stroke="#333" stroke-width="0.8"/>
<line x1="1079.0" y1="896.8" x2="1082.0" y2="901.8" stroke="#333" stroke-width="0.8"/>
<line x1="1105.0" y1="896.8" x2="1108.0" y2="901.8" stroke="#333" stroke-width="0.8"/>
<line x1="1131.0" y1="896.8" x2="1134.0" y2="901.8" stroke="#333" stroke-width="0.8"/>
<line x1="1157.0" y1="896.8" x2="1160.0" y2="901.8" stroke="#333" stroke-width="0.8"/>
<line x1="1183.0" y1="896.8" x2="1186.0" y2="901.8" stroke="#333" stroke-width="0.8"/>
<line x1="1220.4" y1="700" x2="1220.4" y2="1000" stroke="#8a7a7a" stroke-width="1.2" stroke-opacity="0.4"/>
<line x1="1031" y1="255" x2="1077" y2="286.7" stroke="#222" stroke-width="0.8"/>
<line x1="1058.5" y1="255" x2="1101.6" y2="286.3" stroke="#222" stroke-width="0.8"/>
<line x1="1082.3" y1="252.9" x2="1128.7" y2="288" stroke="#222" stroke-width="0.8"/>
<line x1="1105.3" y1="251.6" x2="1158" y2="290" stroke="#222" stroke-width="0.8"/>
<line x1="1127.7" y1="251.6" x2="1186.2" y2="290" stroke="#222" stroke-width="0.8"/>
<line x1="1153" y1="253" x2="1212.6" y2="288" stroke="#222" stroke-width="0.8"/>
<line x1="1179.4" y1="254.3" x2="1237.5" y2="286.7" stroke="#222" stroke-width="0.8"/>
<line x1="1209.6" y1="278.3" x2="1230" y2="290" stroke="#222" stroke-width="0.8"/>
<line x1="1032" y1="277.3" x2="1052.7" y2="291.3" stroke="#222" stroke-width="0.8"/>
<line x1="1020.5" y1="305.6" x2="1087.8" y2="349.5" stroke="#222" stroke-width="0.8"/>
<line x1="1034" y1="305.2" x2="1051.7" y2="317.3" stroke="#222" stroke-width="0.8"/>
<line x1="1048.8" y1="306.6" x2="1111.2" y2="349.5" stroke="#222" stroke-width="0.8"/>
<line x1="1076" y1="306.6" x2="1134.6" y2="349" stroke="#222" stroke-width="0.8"/>
<line x1="1104.3" y1="307.5" x2="1158.3" y2="348.5" stroke="#222" stroke-width="0.8"/>
<line x1="1130.3" y1="307.5" x2="1183.3" y2="347.5" stroke="#222" stroke-width="0.8"/>
<line x1="1156" y1="308" x2="1209.6" y2="347.5" stroke="#222" stroke-width="0.8"/>
<line x1="1181" y1="308" x2="1227.2" y2="344.6" stroke="#222" stroke-width="0.8"/>
<line x1="1208.7" y1="303.6" x2="1231" y2="319.2" stroke="#222" stroke-width="0.8"/>
<line x1="1213.5" y1="333.9" x2="1237" y2="347.5" stroke="#222" stroke-width="0.8"/>
<line x1="1030.2" y1="330" x2="1055.6" y2="347.5" stroke="#222" stroke-width="0.8"/>
<line x1="1012" y1="360" x2="1096.5" y2="409.3" stroke="#222" stroke-width="0.8"/>
<line x1="1042" y1="361" x2="1118" y2="408.9" stroke="#222" stroke-width="0.8"/>
<line x1="1072" y1="361.5" x2="1139.4" y2="408.3" stroke="#222" stroke-width="0.8"/>
<line x1="1103" y1="364" x2="1158.9" y2="405.4" stroke="#222" stroke-width="0.8"/>
<line x1="1134" y1="366.6" x2="1180.4" y2="403.4" stroke="#222" stroke-width="0.8"/>
<line x1="1162" y1="368" x2="1203.8" y2="401.5" stroke="#222" stroke-width="0.8"/>
<line x1="1188" y1="369.3" x2="1229.1" y2="400.5" stroke="#222" stroke-width="0.8"/>
<line x1="1028.3" y1="384.6" x2="1055" y2="401.5" stroke="#222" stroke-width="0.8"/>
<line x1="1030.2" y1="358.2" x2="1055.6" y2="374.8" stroke="#222" stroke-width="0.8"/>
<line x1="1212.6" y1="360" x2="1227.8" y2="372.5" stroke="#222" stroke-width="0.8"/>
<line x1="1216.5" y1="418" x2="1223.3" y2="423.9" stroke="#222" stroke-width="0.8"/>
<line x1="1026.3" y1="412.2" x2="1059.5" y2="429.7" stroke="#222" stroke-width="0.8"/>
<line x1="1014.6" y1="424.5" x2="1093.6" y2="459.6" stroke="#222" stroke-width="0.8"/>
<line x1="1040" y1="422.5" x2="1120.9" y2="461.5" stroke="#222" stroke-width="0.8"/>
<line x1="1066.3" y1="421.5" x2="1145.3" y2="462.5" stroke="#222" stroke-width="0.8"/>
<line x1="1097.1" y1="422.5" x2="1165.8" y2="461.5" stroke="#222" stroke-width="0.8"/>
<line x1="1131.6" y1="424.9" x2="1183.3" y2="459.6" stroke="#222" stroke-width="0.8"/>
<line x1="1165.4" y1="428.4" x2="1199.9" y2="455.7" stroke="#222" stroke-width="0.8"/>
<line x1="1197" y1="432.3" x2="1221.3" y2="451.2" stroke="#222" stroke-width="0.8"/>
<line x1="1026.3" y1="442" x2="1059.5" y2="455.7" stroke="#222" stroke-width="0.8"/>
<line x1="1024.4" y1="468.1" x2="1061.4" y2="484.3" stroke="#222" stroke-width="0.8"/>
<line x1="992" y1="475" x2="1042" y2="503.5" stroke="#222" stroke-width="0.8"/>
<line x1="1019.3" y1="479" x2="1061.9" y2="504" stroke="#222" stroke-width="0.8"/>
<line x1="1071.2" y1="495" x2="1088.7" y2="503.2" stroke="#222" stroke-width="0.8"/>
<line x1="1087.8" y1="492.1" x2="1123.8" y2="506.4" stroke="#222" stroke-width="0.8"/>
<line x1="1115" y1="493.1" x2="1147.8" y2="505.2" stroke="#222" stroke-width="0.8"/>
<line x1="1142" y1="493.1" x2="1172.6" y2="505.4" stroke="#222" stroke-width="0.8"/>
<line x1="1172" y1="493.5" x2="1194" y2="504.8" stroke="#222" stroke-width="0.8"/>
<line x1="1196" y1="490.2" x2="1221.3" y2="507.7" stroke="#222" stroke-width="0.8"/>
<line x1="983.2" y1="504.7" x2="1002.9" y2="533.5" stroke="#222" stroke-width="0.8"/>
<line x1="986.7" y1="516.7" x2="995.9" y2="530" stroke="#222" stroke-width="0.8"/>
<line x1="991" y1="516.7" x2="1002" y2="532" stroke="#222" stroke-width="0.8"/>
<line x1="1007.1" y1="518.1" x2="1029.6" y2="530.7" stroke="#222" stroke-width="0.8"/>
<line x1="1016.2" y1="516" x2="1054.9" y2="530" stroke="#222" stroke-width="0.8"/>
<line x1="1018.3" y1="490" x2="1059.8" y2="516" stroke="#222" stroke-width="0.8"/>
<line x1="1038.7" y1="518.8" x2="1059.8" y2="540.6" stroke="#222" stroke-width="0.8"/>
<line x1="1067" y1="517" x2="1093.5" y2="531.3" stroke="#222" stroke-width="0.8"/>
<line x1="1084.8" y1="517" x2="1089" y2="520" stroke="#222" stroke-width="0.8"/>
<line x1="995.9" y1="539.9" x2="1028.9" y2="568" stroke="#222" stroke-width="0.8"/>
<line x1="1006.4" y1="546.2" x2="1051.3" y2="568.7" stroke="#222" stroke-width="0.8"/>
<line x1="984.6" y1="546.9" x2="998" y2="568" stroke="#222" stroke-width="0.8"/>
<line x1="1023.3" y1="550.4" x2="1059.8" y2="557.4" stroke="#222" stroke-width="0.8"/>
<line x1="1043" y1="552" x2="1065" y2="562" stroke="#222" stroke-width="0.8"/>
<line x1="1004.3" y1="572.2" x2="1028.9" y2="603.8" stroke="#222" stroke-width="0.8"/>
<line x1="1007.8" y1="577.8" x2="1027.5" y2="601" stroke="#222" stroke-width="0.8"/>
<line x1="985.3" y1="582" x2="996.6" y2="601.7" stroke="#222" stroke-width="0.8"/>
<line x1="1031.7" y1="577.1" x2="1059.8" y2="591.1" stroke="#222" stroke-width="0.8"/>
<line x1="1034.5" y1="580" x2="1048.5" y2="594.6" stroke="#222" stroke-width="0.8"/>
<line x1="989.8" y1="590" x2="996.7" y2="601.2" stroke="#222" stroke-width="0.8"/>
<line x1="1012.1" y1="607.2" x2="1022.4" y2="621.7" stroke="#222" stroke-width="0.8"/>
<line x1="987.3" y1="620.9" x2="995" y2="632" stroke="#222" stroke-width="0.8"/>
<line x1="1012" y1="619" x2="1023" y2="632" stroke="#222" stroke-width="0.8"/>
<line x1="1017.3" y1="590" x2="1029.3" y2="603.7" stroke="#222" stroke-width="0.8"/>
<line x1="1019" y1="590" x2="1031" y2="603" stroke="#222" stroke-width="0.8"/>
<line x1="1037.9" y1="609.7" x2="1049" y2="616.6" stroke="#222" stroke-width="0.8"/>
<line x1="1049" y1="611.5" x2="1059" y2="615.8" stroke="#222" stroke-width="0.8"/>
<line x1="988.1" y1="653.5" x2="993.3" y2="663.8" stroke="#222" stroke-width="0.8"/>
<line x1="1015.6" y1="656.9" x2="1020.7" y2="663.8" stroke="#222" stroke-width="0.8"/>
<line x1="963.5" y1="622.6" x2="967" y2="629" stroke="#222" stroke-width="0.8"/>
<line x1="1041" y1="638" x2="1044" y2="641" stroke="#222" stroke-width="0.8"/>
<line x1="1041" y1="683" x2="1044" y2="686" stroke="#222" stroke-width="0.8"/>
<line x1="987" y1="682" x2="990" y2="686" stroke="#222" stroke-width="0.8"/>
<line x1="963.5" y1="520" x2="965.5" y2="530" stroke="#222" stroke-width="0.8"/>
<line x1="971" y1="520.5" x2="975" y2="529" stroke="#222" stroke-width="0.8"/>
<line x1="949.5" y1="522" x2="949.5" y2="527" stroke="#222" stroke-width="0.8"/>
<line x1="937.3" y1="521.5" x2="937.3" y2="525.5" stroke="#222" stroke-width="0.8"/>
<line x1="962" y1="553" x2="966" y2="562" stroke="#222" stroke-width="0.8"/>
<line x1="937.5" y1="555.5" x2="937.5" y2="559.5" stroke="#222" stroke-width="0.8"/>
<line x1="910.5" y1="556.5" x2="910.5" y2="558.5" stroke="#222" stroke-width="0.8"/>
<line x1="962" y1="587" x2="966" y2="596" stroke="#222" stroke-width="0.8"/>
<line x1="937.5" y1="590" x2="937.5" y2="594" stroke="#222" stroke-width="0.8"/>
<line x1="910.5" y1="591" x2="910.5" y2="593" stroke="#222" stroke-width="0.8"/>
<line x1="962" y1="660" x2="966" y2="665" stroke="#222" stroke-width="0.8"/>
<line x1="937.5" y1="624.5" x2="937.5" y2="628.5" stroke="#222" stroke-width="0.8"/>
<line x1="910.5" y1="625.5" x2="910.5" y2="627.5" stroke="#222" stroke-width="0.8"/>
<line x1="1093.5" y1="528.6" x2="1105.5" y2="518.2" stroke="#222" stroke-width="0.8"/>
<line x1="1098" y1="530" x2="1110" y2="520" stroke="#222" stroke-width="0.8"/>
<line x1="1131" y1="527" x2="1134" y2="519" stroke="#222" stroke-width="0.8"/>
<line x1="1136" y1="527" x2="1138" y2="519" stroke="#222" stroke-width="0.8"/>
<line x1="1178" y1="519" x2="1187" y2="527" stroke="#222" stroke-width="0.8"/>
<line x1="1178" y1="519" x2="1190" y2="527" stroke="#222" stroke-width="0.8"/>
<line x1="1193" y1="520" x2="1206" y2="527" stroke="#222" stroke-width="0.8"/>
<line x1="1213" y1="518" x2="1222" y2="527" stroke="#222" stroke-width="0.8"/>
<line x1="1105" y1="559" x2="1115" y2="556" stroke="#222" stroke-width="0.8"/>
<line x1="1125" y1="559" x2="1135" y2="556" stroke="#222" stroke-width="0.8"/>
<line x1="1150" y1="559" x2="1160" y2="556" stroke="#222" stroke-width="0.8"/>
<line x1="1175" y1="559" x2="1185" y2="556" stroke="#222" stroke-width="0.8"/>
<line x1="1200" y1="559" x2="1210" y2="556" stroke="#222" stroke-width="0.8"/>
<line x1="1101" y1="594" x2="1107" y2="590" stroke="#222" stroke-width="0.8"/>
<line x1="1127" y1="594" x2="1133" y2="590" stroke="#222" stroke-width="0.8"/>
<line x1="1153" y1="594" x2="1159" y2="590" stroke="#222" stroke-width="0.8"/>
<line x1="1179" y1="594" x2="1185" y2="590" stroke="#222" stroke-width="0.8"/>
<line x1="1205" y1="594" x2="1211" y2="590" stroke="#222" stroke-width="0.8"/>
<line x1="1047" y1="612" x2="1058" y2="617" stroke="#222" stroke-width="0.8"/>
<line x1="1052" y1="611" x2="1065" y2="616" stroke="#222" stroke-width="0.8"/>
<line x1="1082" y1="615" x2="1087" y2="612" stroke="#222" stroke-width="0.8"/>
<line x1="1108" y1="615" x2="1113" y2="612" stroke="#222" stroke-width="0.8"/>
<line x1="1134" y1="615" x2="1139" y2="612" stroke="#222" stroke-width="0.8"/>
<line x1="1159" y1="615" x2="1164" y2="612" stroke="#222" stroke-width="0.8"/>
<line x1="1206" y1="615" x2="1209" y2="612" stroke="#222" stroke-width="0.8"/>
<line x1="1100" y1="628" x2="1105" y2="625" stroke="#222" stroke-width="0.8"/>
<line x1="1127" y1="628" x2="1132" y2="625" stroke="#222" stroke-width="0.8"/>
<line x1="1153" y1="628" x2="1158" y2="625" stroke="#222" stroke-width="0.8"/>
<line x1="1180" y1="628" x2="1185" y2="625" stroke="#222" stroke-width="0.8"/>
<line x1="1043" y1="626" x2="1047" y2="628" stroke="#222" stroke-width="0.8"/>
<rect x="917" y="505" width="86" height="9" fill="#fff" stroke="#000c78" stroke-width="2.2"/>
<rect x="1043" y="504.5" width="51" height="12" fill="#fff"/>
<circle cx="1042.5" cy="517" r="3.2" fill="#000"/>
</svg>
<div class="t" style="left:1041.84px;top:505px;font-size:11px;line-height:12px;font-weight:700;color:#000;transform:scaleX(1.0168);transform-origin:0 0;">0.251 mm</div>
</body></html>
